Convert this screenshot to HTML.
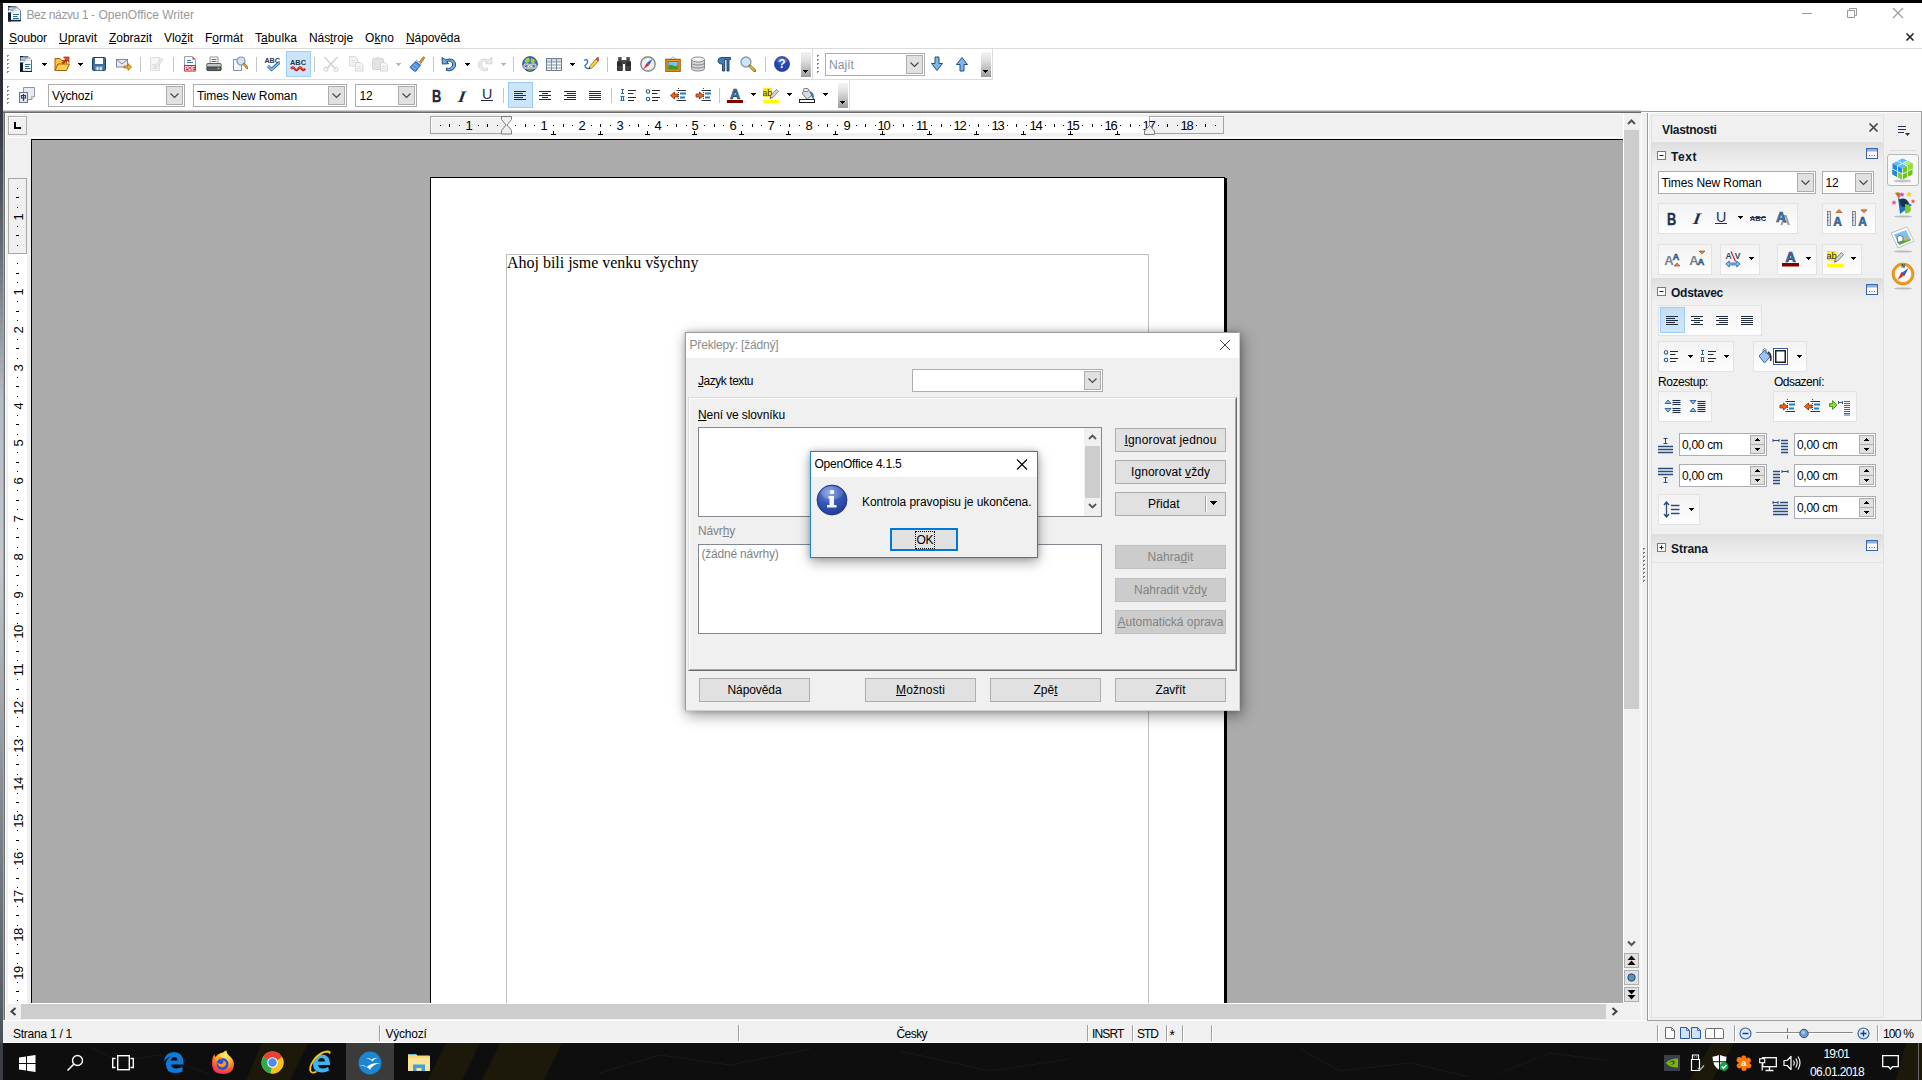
<!DOCTYPE html>
<html><head><meta charset="utf-8"><title>Bez názvu 1 - OpenOffice Writer</title>
<style>
*{box-sizing:border-box;margin:0;padding:0}
html,body{width:1922px;height:1080px;overflow:hidden;background:#fff;font-family:"Liberation Sans",sans-serif;font-size:12px;color:#000}
div,span.t,svg{position:absolute}
span.t{white-space:pre}
u{text-decoration:underline;text-underline-offset:1px}
.btn{background:#e1e1e1;border:1px solid #adadad}
.btnd{background:#cccccc;border:1px solid #bfbfbf}
.combo{background:#fff;border:1px solid #abadb3}
.cbtn{background:#e1e1e1;border:1px solid #adadad}

</style></head>
<body>

<!-- p_frame -->
<div style="left:0px;top:0px;width:1922px;height:3px;background:#000"></div><div style="left:0px;top:3px;width:3px;height:1040px;background:linear-gradient(#1c1c1c 0,#262830 5.500%,#33363e 11%,#6a7078 24%,#b4bcc4 38%,#c4c8cc 54%,#a0a6ac 67%,#787e86 81%,#565e68 96%,#4a5058 100%)"></div><div style="left:3px;top:3px;width:1919px;height:25px;background:#fff"></div><svg style="left:7px;top:5px;" width="16" height="17" viewBox="0 0 16 17">
      <path d="M1.500 1.500h8l4 4v10.500h-12z" fill="#fff" stroke="#6f7a86" stroke-width="1"/>
      <path d="M1 1h3v15.500H1z" fill="#0c1c32"/>
      <path d="M1 15.500h13" stroke="#1a2430" stroke-width="1.400"/>
      <path d="M1.500 2h8l3.500 3.500q-5-1-7 3-2-1.500-4.500-.500z" fill="#8fa3b5"/>
      <path d="M0 6.500q4-1 6 1 2-3.500 6.500-3.500" fill="none" stroke="#fff" stroke-width="1.100"/>
      <path d="M2 3.500q3-.500 5 1 1.500-1.500 3.500-1.500" fill="none" stroke="#e8eef4" stroke-width=".8"/>
      <path d="M6 9.500h6M6 11.500h4.500M6 13.500h6" stroke="#2f6a9e" stroke-width="1.100"/>
    </svg><span class="t" style="left:26.5px;top:9px;font-size:12px;line-height:12px;color:#999;letter-spacing:-0.413px;">Bez názvu 1 -</span><span class="t" style="left:98.5px;top:9px;font-size:12px;line-height:12px;color:#999;letter-spacing:-0.006px;">OpenOffice Writer</span><svg style="left:1800px;top:7px;" width="14" height="12" viewBox="0 0 14 12"><path d="M2 6.5h10" stroke="#999" stroke-width="1"/></svg><svg style="left:1845px;top:6px;" width="14" height="14" viewBox="0 0 14 14"><path d="M2.5 4.5h7v7h-7z M4.5 4.5v-2h7v7h-2" fill="none" stroke="#999" stroke-width="1"/></svg><svg style="left:1891px;top:6px;" width="14" height="14" viewBox="0 0 14 14"><path d="M2 2l10 10M12 2l-10 10" stroke="#999" stroke-width="1.1"/></svg><div style="left:3px;top:28px;width:1919px;height:20px;background:#fff"></div><span class="t" style="left:9px;top:32px;font-size:12px;line-height:12px;color:#000;letter-spacing:-0.120px;"><u>S</u>oubor</span><span class="t" style="left:59px;top:32px;font-size:12px;line-height:12px;color:#000;letter-spacing:-0.002px;"><u>U</u>pravit</span><span class="t" style="left:109px;top:32px;font-size:12px;line-height:12px;color:#000;letter-spacing:-0.047px;"><u>Z</u>obrazit</span><span class="t" style="left:164px;top:32px;font-size:12px;line-height:12px;color:#000;letter-spacing:-0.057px;">Vlo<u>ž</u>it</span><span class="t" style="left:205px;top:32px;font-size:12px;line-height:12px;color:#000;letter-spacing:-0.005px;">F<u>o</u>rmát</span><span class="t" style="left:255px;top:32px;font-size:12px;line-height:12px;color:#000;letter-spacing:0.089px;">T<u>a</u>bulka</span><span class="t" style="left:309px;top:32px;font-size:12px;line-height:12px;color:#000;letter-spacing:-0.088px;">Nás<u>t</u>roje</span><span class="t" style="left:365px;top:32px;font-size:12px;line-height:12px;color:#000;letter-spacing:0.074px;">O<u>k</u>no</span><span class="t" style="left:406px;top:32px;font-size:12px;line-height:12px;color:#000;letter-spacing:-0.090px;"><u>N</u>ápověda</span><svg style="left:1904px;top:31px;" width="12" height="12" viewBox="0 0 12 12"><path d="M2.5 2.5l7 7M9.5 2.5l-7 7" stroke="#222" stroke-width="1.6"/></svg><div style="left:3px;top:48px;width:1919px;height:1px;background:#dadada"></div><div style="left:1921px;top:111px;width:1px;height:911px;background:#a0a0a0"></div>
<!-- p_toolbars -->
<div style="left:3px;top:49px;width:1918px;height:63px;background:#fff"></div><div style="left:3px;top:79px;width:989px;height:1px;background:#dcdcdc"></div><div style="left:812px;top:49px;width:1px;height:30px;background:#dcdcdc"></div><div style="left:992px;top:49px;width:1px;height:31px;background:#dcdcdc"></div><div style="left:849px;top:80px;width:1px;height:31px;background:#dcdcdc"></div><div style="left:3px;top:110px;width:1638px;height:1px;background:#cfcfcf"></div><div style="left:3px;top:111px;width:1638px;height:1px;background:#9a9a9a"></div><div style="left:3px;top:112px;width:1638px;height:1px;background:#6b6b6b"></div><div style="left:1641px;top:111px;width:281px;height:1px;background:#a0a0a0"></div><div style="left:7px;top:55px;width:2px;height:1px;background:#8a8a8a"></div><div style="left:7px;top:56px;width:1px;height:1px;background:#8a8a8a"></div><div style="left:7px;top:59px;width:2px;height:1px;background:#8a8a8a"></div><div style="left:7px;top:60px;width:1px;height:1px;background:#8a8a8a"></div><div style="left:7px;top:63px;width:2px;height:1px;background:#8a8a8a"></div><div style="left:7px;top:64px;width:1px;height:1px;background:#8a8a8a"></div><div style="left:7px;top:67px;width:2px;height:1px;background:#8a8a8a"></div><div style="left:7px;top:68px;width:1px;height:1px;background:#8a8a8a"></div><div style="left:7px;top:71px;width:2px;height:1px;background:#8a8a8a"></div><div style="left:7px;top:72px;width:1px;height:1px;background:#8a8a8a"></div><svg style="left:18px;top:56px;" width="16" height="16" viewBox="0 0 16 16"><path d="M2.500 .5h7.500l3.500 3.500v11.500h-11z" fill="#fdfdfd" stroke="#5f6b78"/>
<path d="M2 0h3v16H2z" fill="#0c1c32"/><path d="M2 15.500h12" stroke="#1a2430" stroke-width="1.300"/>
<path d="M2.500 1h7.500l3 3.500q-5-1-7 3-2-1.500-3.500-.500z" fill="#8fa3b5"/>
<path d="M0 6q5-1.500 7 .500 2-3.500 6.500-3.500" fill="none" stroke="#fff" stroke-width="1.100"/>
<path d="M3 2.800q3-.500 5 1 1.500-1.500 3-1.500" fill="none" stroke="#e8eef4" stroke-width=".8"/>
<path d="M7 8.500h5.500M7 10.500h4M7 12.500h5.500" stroke="#2f6a9e"/></svg><div style="left:42px;top:63px;width:5px;height:1px;background:#000"></div><div style="left:43px;top:64px;width:3px;height:1px;background:#000"></div><div style="left:44px;top:65px;width:1px;height:1px;background:#000"></div><svg style="left:54px;top:56px;" width="16" height="16" viewBox="0 0 16 16"><path d="M1 14.5V2.5h5l1.5 2h5v3" fill="#f9c440" stroke="#a85c10"/>
<path d="M1 14.5l3-6.5h11.5l-3 6.5z" fill="#fbd24f" stroke="#a85c10"/>
<path d="M8.5 7.5l4-4" stroke="#c0360c" stroke-width="2.4"/><path d="M9.5 1h5.5v5.5z" fill="#e5531a" stroke="#9e2a08" stroke-width=".7"/></svg><div style="left:78px;top:63px;width:5px;height:1px;background:#000"></div><div style="left:79px;top:64px;width:3px;height:1px;background:#000"></div><div style="left:80px;top:65px;width:1px;height:1px;background:#000"></div><svg style="left:91px;top:56px;" width="16" height="16" viewBox="0 0 16 16"><rect x="1.5" y="1.5" width="13" height="13" rx="1.2" fill="#3f6f9f" stroke="#1d3f63"/>
<rect x="4" y="2" width="8" height="6" fill="#fff"/><rect x="4" y="10" width="8" height="4.5" fill="#6f8faf"/>
<rect x="5.5" y="11" width="2" height="3" fill="#e8eef4"/><rect x="8.7" y="11" width="2" height="3" fill="#e8eef4"/></svg><svg style="left:116px;top:56px;" width="16" height="16" viewBox="0 0 16 16"><rect x=".5" y="3.5" width="11" height="7.5" fill="#e6ebf2" stroke="#7b8a9c"/><path d="M.5 3.5l5.5 4.5 5.5-4.5" fill="none" stroke="#7b8a9c"/>
<path d="M8 10h4V7.6l3.6 3.4-3.6 3.4V12H8z" fill="#f5b32a" stroke="#a96508" stroke-width=".8"/></svg><div style="left:140px;top:57px;width:1px;height:15px;background:#c5c5c5"></div><svg style="left:148px;top:56px;" width="16" height="16" viewBox="0 0 16 16"><path d="M2.5 1.5h9v13h-9z" fill="#f6f6f6" stroke="#dcdcdc"/><path d="M4 8.5h4M4 10.5h3M4 12.5h6" stroke="#dedede"/>
<path d="M7 10l6.5-8 1.7 1.4-6.5 8-2.3.9z" fill="#ececec" stroke="#d4d4d4" stroke-width=".8"/></svg><div style="left:173px;top:57px;width:1px;height:15px;background:#c5c5c5"></div><svg style="left:182px;top:56px;" width="16" height="16" viewBox="0 0 16 16"><path d="M2.5 .5h8l3 3v12h-11z" fill="#fafbfd" stroke="#9aa3ad"/><path d="M10.5.5v3h3z" fill="#e03030"/>
<path d="M5 4.5h4M5 6.5h6" stroke="#3b78b5"/><rect x="2" y="9" width="12" height="5.5" fill="#d9201e"/>
<text x="8" y="13.6" font-family="Liberation Sans" font-weight="bold" font-size="5.2" fill="#fff" text-anchor="middle">PDF</text></svg><svg style="left:206px;top:56px;" width="16" height="16" viewBox="0 0 16 16"><path d="M4 1h8v7H4z" fill="#fcfdfe" stroke="#8b949d"/><path d="M5.5 3.5h5M5.5 5.5h5" stroke="#3575b5"/>
<rect x=".8" y="7.5" width="14.4" height="4" rx="1" fill="#c3c6c9" stroke="#3c3f43" stroke-width=".8"/>
<rect x=".8" y="11" width="14.4" height="3.6" rx="1" fill="#585c60" stroke="#2a2c2f" stroke-width=".8"/><circle cx="12.5" cy="12.5" r="1" fill="#7be04a"/></svg><svg style="left:232px;top:56px;" width="16" height="16" viewBox="0 0 16 16"><path d="M1.5 3.5h8v11h-8z" fill="#f1f4f8" stroke="#8a939c"/><circle cx="9" cy="5" r="4" fill="#cfe3f4" stroke="#7f95ab" stroke-width="1.2"/>
<path d="M12 8.2l3.4 3.6" stroke="#9a6a14" stroke-width="2.6" stroke-linecap="round"/><path d="M12.2 8.4l3 3.2" stroke="#e9b94a" stroke-width="1.2" stroke-linecap="round"/></svg><div style="left:256px;top:57px;width:1px;height:15px;background:#c5c5c5"></div><svg style="left:264px;top:56px;" width="16" height="16" viewBox="0 0 16 16"><text x="8.2" y="6.6" font-family="Liberation Sans" font-weight="bold" font-size="7.2" fill="#22384e" text-anchor="middle">ABC</text>
<path d="M4 10l3.5 3.5 8-7" fill="none" stroke="#1e5ea8" stroke-width="3"/><path d="M4 10l3.5 3.5 8-7" fill="none" stroke="#8cc6f7" stroke-width="1.3"/></svg><div style="left:286px;top:51px;width:25px;height:26px;background:#cce4f7;border:1px solid #9fd0fb"></div><svg style="left:290px;top:56px;" width="16" height="16" viewBox="0 0 16 16"><text x="8" y="8.6" font-family="Liberation Sans" font-weight="bold" font-size="7.4" fill="#22384e" text-anchor="middle">ABC</text>
<path d="M1 12.8q2-2.6 3.7 0t3.5 0 3.5 0 3.3-.3" fill="none" stroke="#c81616" stroke-width="2.3"/><path d="M1.3 12.4q1.8-2.2 3.4 0t3.5 0 3.5 0 3-.3" fill="none" stroke="#ff6a4a" stroke-width=".8"/></svg><div style="left:314px;top:57px;width:1px;height:15px;background:#c5c5c5"></div><svg style="left:323px;top:56px;" width="16" height="16" viewBox="0 0 16 16"><path d="M1.5 1l11 12M14.5 1l-11 12" stroke="#d2d2d2" stroke-width="1.6"/><circle cx="3" cy="13.3" r="1.9" fill="none" stroke="#dadada" stroke-width="1.3"/><circle cx="13" cy="13.3" r="1.9" fill="none" stroke="#dadada" stroke-width="1.3"/></svg><svg style="left:348px;top:56px;" width="16" height="16" viewBox="0 0 16 16"><path d="M1.5 .5h5.5l2.5 2.5v7h-8z" fill="#f4f4f4" stroke="#d9d9d9"/><path d="M7.5 6.5h5l2.5 2.5v6h-7.5z" fill="#f6f6f6" stroke="#d6d6d6"/>
<path d="M3 4.5h4M3 6.5h3M9 10.5h4.5M9 12.5h4.5" stroke="#e0e0e0"/></svg><svg style="left:372px;top:56px;" width="16" height="16" viewBox="0 0 16 16"><rect x=".5" y="2.5" width="11" height="11" rx="1" fill="#e4e4e4" stroke="#d4d4d4"/><path d="M3.5 3L6 .8 8.5 3z" fill="#eee" stroke="#d0d0d0" stroke-width=".8"/>
<path d="M8.5 6.5h4.5l2.5 2.5v6h-7z" fill="#f6f6f6" stroke="#d3d3d3"/><path d="M10 10.5h4M10 12.5h4" stroke="#dedede"/></svg><div style="left:396px;top:63px;width:5px;height:1px;background:#b5b5b5"></div><div style="left:397px;top:64px;width:3px;height:1px;background:#b5b5b5"></div><div style="left:398px;top:65px;width:1px;height:1px;background:#b5b5b5"></div><svg style="left:409px;top:56px;" width="16" height="16" viewBox="0 0 16 16"><path d="M10.5 5.5l4-4.8 1.3 1-3.5 5.2z" fill="#e3a21c" stroke="#8a5a08" stroke-width=".7"/><path d="M7.6 4.4l4.6 3.7-1 1.2-4.6-3.7z" fill="#f4f6f8" stroke="#555" stroke-width=".6"/>
<path d="M6.6 5.6l4.6 3.7-4 5.7q-1 .8-2.300-.2L.8 11.300z" fill="#4d8fe0" stroke="#1a4fa0" stroke-width=".8"/><path d="M3 10.500l4 3M5 8l4 3.200" stroke="#9cc7f7" stroke-width=".9"/></svg><div style="left:433px;top:57px;width:1px;height:15px;background:#c5c5c5"></div><svg style="left:441px;top:56px;" width="16" height="16" viewBox="0 0 16 16"><path d="M1 1.500l.3 6.500 6.500-.300-2.300-2q4.300-1.700 6 1.500 1.300 3.300-2.500 5-1.500.500-3.300-.200l-.4 2.400q3.600 1.200 6.700-.700 3.700-2.700 2.300-7.200-2.300-5.200-9.600-2.700z" fill="#7aaad6" stroke="#1f4f80" stroke-width="1" stroke-linejoin="round"/></svg><div style="left:465px;top:63px;width:5px;height:1px;background:#000"></div><div style="left:466px;top:64px;width:3px;height:1px;background:#000"></div><div style="left:467px;top:65px;width:1px;height:1px;background:#000"></div><svg style="left:477px;top:56px;" width="16" height="16" viewBox="0 0 16 16"><path d="M15 1.500l-.3 6.500-6.500-.300 2.300-2q-4.300-1.700-6 1.500-1.300 3.300 2.500 5 1.500.500 3.300-.200l.4 2.400q-3.600 1.200-6.700-.700-3.700-2.700-2.300-7.200 2.300-5.200 9.600-2.700z" fill="#ececec" stroke="#d6d6d6" stroke-width="1" stroke-linejoin="round"/></svg><div style="left:501px;top:63px;width:5px;height:1px;background:#b5b5b5"></div><div style="left:502px;top:64px;width:3px;height:1px;background:#b5b5b5"></div><div style="left:503px;top:65px;width:1px;height:1px;background:#b5b5b5"></div><div style="left:513px;top:57px;width:1px;height:15px;background:#c5c5c5"></div><svg style="left:522px;top:56px;" width="16" height="16" viewBox="0 0 16 16"><circle cx="8" cy="8" r="7.4" fill="#3f78c4" stroke="#1d3f7c" stroke-width=".8"/><path d="M3 4q2-3 4-2l1 3-3 2-2-1zM9 2.500q3-.500 4 2l-1 3-3-1z" fill="#a8cf2e"/><path d="M4 12q3-2 8 0-2 3-4 3t-4-3z" fill="#6fae2a"/>
<rect x="2.200" y="8.300" width="5.300" height="4" rx="2" fill="none" stroke="#fff" stroke-width="1.500"/><rect x="8.500" y="8.300" width="5.300" height="4" rx="2" fill="none" stroke="#fff" stroke-width="1.500"/><path d="M5.500 10.300h5" stroke="#fff" stroke-width="1.500"/>
<rect x="2.200" y="8.300" width="5.300" height="4" rx="2" fill="none" stroke="#333" stroke-width=".4"/><rect x="8.500" y="8.300" width="5.300" height="4" rx="2" fill="none" stroke="#333" stroke-width=".4"/></svg><svg style="left:546px;top:56px;" width="16" height="16" viewBox="0 0 16 16"><rect x=".5" y="2.500" width="15" height="12" fill="#fff" stroke="#6b7c96"/><rect x="1" y="3" width="14" height="2.800" fill="#d3dbe8"/><path d="M.5 6h15M.5 9h15M.5 12h15M5.500 2.500v12M10.500 2.500v12" stroke="#7f8da6" stroke-width="1"/></svg><div style="left:570px;top:63px;width:5px;height:1px;background:#000"></div><div style="left:571px;top:64px;width:3px;height:1px;background:#000"></div><div style="left:572px;top:65px;width:1px;height:1px;background:#000"></div><svg style="left:583px;top:56px;" width="16" height="16" viewBox="0 0 16 16"><path d="M1 4.500q3-2 3.500.500T2 9.500q0 3 4 3" fill="none" stroke="#2a6fd6" stroke-width="1.300"/><path d="M6 13l1-3.200 6-6.800 2.300 2-6 6.800z" fill="#f8d23a" stroke="#7a5a10" stroke-width=".7"/><path d="M13 3l1.200-1.400q1-.500 1.800.300t.300 1.700L15.300 5z" fill="#e9506a" stroke="#a02040" stroke-width=".6"/><path d="M6 13l.500-1.700 1.200 1z" fill="#222"/></svg><div style="left:607px;top:57px;width:1px;height:15px;background:#c5c5c5"></div><svg style="left:616px;top:56px;" width="16" height="16" viewBox="0 0 16 16"><rect x="1" y="5" width="5.800" height="10" rx="1.200" fill="#2b2b2b"/><rect x="9.200" y="5" width="5.800" height="10" rx="1.200" fill="#2b2b2b"/><rect x="2.300" y="1" width="3.300" height="5" fill="#3a3a3a"/><rect x="10.400" y="1" width="3.300" height="5" fill="#3a3a3a"/><rect x="5.500" y="4" width="5" height="4" fill="#444"/>
<path d="M1.500 11h5M9.500 11h5M1.500 13h5M9.500 13h5" stroke="#6a6a6a" stroke-width=".7"/><path d="M3 2h2M11 2h2" stroke="#999" stroke-width=".7"/></svg><svg style="left:640px;top:56px;" width="16" height="16" viewBox="0 0 16 16"><circle cx="8" cy="8" r="7.200" fill="#f3f4f6" stroke="#6d7379" stroke-width="1.200"/><circle cx="8" cy="8" r="5.600" fill="none" stroke="#aab" stroke-width=".5" stroke-dasharray=".7 1.500"/><path d="M12.800 2.800L9.200 9.200 6.800 6.800z" fill="#2a62d8"/><path d="M3.200 13.200L6.800 6.800 9.200 9.200z" fill="#e02828"/></svg><svg style="left:665px;top:56px;" width="16" height="16" viewBox="0 0 16 16"><path d="M5 3.500L8 .8 11 3.500" fill="none" stroke="#999" stroke-width=".8"/><rect x=".8" y="3.300" width="14.400" height="12" fill="#f0a018" stroke="#8a4a06" stroke-width="1"/><rect x="3" y="5.500" width="10" height="7.600" fill="#7fc0f0" stroke="#7a3f04" stroke-width=".6"/><path d="M3.300 13v-3.500q2.500-1.500 5 0t4.400-.500V13z" fill="#3f9a2a"/></svg><svg style="left:690px;top:56px;" width="16" height="16" viewBox="0 0 16 16"><path d="M1.500 3.500v9q0 2.500 6.500 2.500t6.500-2.500v-9z" fill="#d4d6d8" stroke="#6f7478" stroke-width=".8"/><ellipse cx="8" cy="3.500" rx="6.500" ry="2.500" fill="#f2f3f4" stroke="#6f7478" stroke-width=".8"/><path d="M1.500 6.500q0 2.500 6.500 2.500t6.500-2.500M1.500 9.500q0 2.500 6.500 2.500t6.500-2.500" fill="none" stroke="#7c8186" stroke-width=".9"/></svg><svg style="left:716px;top:56px;" width="16" height="16" viewBox="0 0 16 16"><path d="M6.500 15V8Q2 8 2 4.700 2 1.500 6 1.500h8.500v2H13V15h-2V3.500H8.700V15z" fill="#3f7fb5" stroke="#16385c" stroke-width=".9" stroke-linejoin="round"/></svg><svg style="left:740px;top:56px;" width="16" height="16" viewBox="0 0 16 16"><circle cx="6" cy="6" r="5" fill="#cfe5f6" stroke="#7f98ae" stroke-width="1.300"/><path d="M10 10l4.600 4.600" stroke="#9a6a14" stroke-width="3" stroke-linecap="round"/><path d="M10.300 10.300l4 4" stroke="#f0c050" stroke-width="1.400" stroke-linecap="round"/></svg><div style="left:765px;top:57px;width:1px;height:15px;background:#c5c5c5"></div><svg style="left:774px;top:56px;" width="16" height="16" viewBox="0 0 16 16"><circle cx="8" cy="8" r="7.600" fill="#2546b0" stroke="#152a78" stroke-width=".6"/><ellipse cx="8" cy="4.500" rx="5.500" ry="3.300" fill="#5f7fd8" opacity=".55"/>
<text x="8" y="12.300" font-family="Liberation Sans" font-weight="bold" font-size="12" fill="#fff" text-anchor="middle">?</text></svg><div style="left:801px;top:52px;width:10px;height:25px;background:linear-gradient(#f4f4f4,#dedede 35%,#9c9c9c)"></div><div style="left:803px;top:70px;width:5px;height:1px;background:#000"></div><div style="left:804px;top:71px;width:3px;height:1px;background:#000"></div><div style="left:805px;top:72px;width:1px;height:1px;background:#000"></div><div style="left:817px;top:55px;width:2px;height:1px;background:#8a8a8a"></div><div style="left:817px;top:56px;width:1px;height:1px;background:#8a8a8a"></div><div style="left:817px;top:59px;width:2px;height:1px;background:#8a8a8a"></div><div style="left:817px;top:60px;width:1px;height:1px;background:#8a8a8a"></div><div style="left:817px;top:63px;width:2px;height:1px;background:#8a8a8a"></div><div style="left:817px;top:64px;width:1px;height:1px;background:#8a8a8a"></div><div style="left:817px;top:67px;width:2px;height:1px;background:#8a8a8a"></div><div style="left:817px;top:68px;width:1px;height:1px;background:#8a8a8a"></div><div style="left:817px;top:71px;width:2px;height:1px;background:#8a8a8a"></div><div style="left:817px;top:72px;width:1px;height:1px;background:#8a8a8a"></div><div class="combo" style="left:825px;top:53px;width:100px;height:23px;"></div><div class="cbtn" style="left:906px;top:55px;width:17px;height:19px;"></div><svg style="left:909px;top:61px;" width="11" height="7" viewBox="0 0 11 7"><path d="M1.500 1.500l4 4 4-4" fill="none" stroke="#444" stroke-width="1.100"/></svg><span class="t" style="left:829px;top:59px;font-size:12px;line-height:12px;color:#8a8fa6;letter-spacing:0.062px;">Najít</span><svg style="left:929px;top:56px;" width="16" height="16" viewBox="0 0 16 16"><path d="M6 1h4v6.500h3.500L8 14.500 2.500 7.500H6z" fill="#7fb5e8" stroke="#1f4f86" stroke-width="1" stroke-linejoin="round"/></svg><svg style="left:954px;top:56px;" width="16" height="16" viewBox="0 0 16 16"><path d="M6 15h4V8.500h3.500L8 1.500 2.500 8.500H6z" fill="#7fb5e8" stroke="#1f4f86" stroke-width="1" stroke-linejoin="round"/></svg><div style="left:981px;top:52px;width:10px;height:25px;background:linear-gradient(#f4f4f4,#dedede 35%,#9c9c9c)"></div><div style="left:983px;top:70px;width:5px;height:1px;background:#000"></div><div style="left:984px;top:71px;width:3px;height:1px;background:#000"></div><div style="left:985px;top:72px;width:1px;height:1px;background:#000"></div><div style="left:7px;top:86px;width:2px;height:1px;background:#8a8a8a"></div><div style="left:7px;top:87px;width:1px;height:1px;background:#8a8a8a"></div><div style="left:7px;top:90px;width:2px;height:1px;background:#8a8a8a"></div><div style="left:7px;top:91px;width:1px;height:1px;background:#8a8a8a"></div><div style="left:7px;top:94px;width:2px;height:1px;background:#8a8a8a"></div><div style="left:7px;top:95px;width:1px;height:1px;background:#8a8a8a"></div><div style="left:7px;top:98px;width:2px;height:1px;background:#8a8a8a"></div><div style="left:7px;top:99px;width:1px;height:1px;background:#8a8a8a"></div><div style="left:7px;top:102px;width:2px;height:1px;background:#8a8a8a"></div><div style="left:7px;top:103px;width:1px;height:1px;background:#8a8a8a"></div><svg style="left:19px;top:87px;" width="16" height="16" viewBox="0 0 16 16"><path d="M4.500 .500h11v9l-3 3h-8z" fill="#e6ebf2" stroke="#8894a6"/><path d="M15.500 9.500h-3v3z" fill="#fff" stroke="#8894a6" stroke-width=".7"/><rect x=".5" y="5.500" width="8" height="10" fill="#dfe5ee" stroke="#6a778a"/><path d="M2.500 8.500h4v2.500h-4zM4.500 7v7" fill="none" stroke="#2d3c50" stroke-width="1.100"/></svg><div class="combo" style="left:48px;top:84px;width:137px;height:23px;"></div><div class="cbtn" style="left:166px;top:86px;width:17px;height:19px;"></div><svg style="left:169px;top:92px;" width="11" height="7" viewBox="0 0 11 7"><path d="M1.500 1.500l4 4 4-4" fill="none" stroke="#444" stroke-width="1.100"/></svg><span class="t" style="left:52px;top:90px;font-size:12px;line-height:12px;color:#000;letter-spacing:-0.241px;">Výchozí</span><div class="combo" style="left:193px;top:84px;width:154px;height:23px;"></div><div class="cbtn" style="left:328px;top:86px;width:17px;height:19px;"></div><svg style="left:331px;top:92px;" width="11" height="7" viewBox="0 0 11 7"><path d="M1.500 1.500l4 4 4-4" fill="none" stroke="#444" stroke-width="1.100"/></svg><span class="t" style="left:197px;top:90px;font-size:12px;line-height:12px;color:#000;letter-spacing:-0.105px;">Times New Roman</span><div class="combo" style="left:355px;top:84px;width:62px;height:23px;"></div><div class="cbtn" style="left:398px;top:86px;width:17px;height:19px;"></div><svg style="left:401px;top:92px;" width="11" height="7" viewBox="0 0 11 7"><path d="M1.500 1.500l4 4 4-4" fill="none" stroke="#444" stroke-width="1.100"/></svg><span class="t" style="left:359.5px;top:90px;font-size:12px;line-height:12px;color:#000;letter-spacing:-0.180px;">12</span><span class="t" style="left:431.5px;top:89px;font-size:16px;line-height:16px;color:#1f2a40;font-weight:bold;transform:scaleX(.8);transform-origin:0 0;-webkit-text-stroke:.35px #1f2a40;">B</span><span class="t" style="left:457.0px;top:89px;font-size:16px;line-height:16px;color:#1f2a40;font-family:'Liberation Serif',serif;font-weight:bold;font-style:italic;transform:scaleX(1.15) skewX(-8deg);transform-origin:0 100%;">I</span><span class="t" style="left:482px;top:87px;font-size:14px;line-height:14px;color:#1f2a40;transform:scaleX(1.02);transform-origin:0 0;">U</span><div style="left:481px;top:100px;width:12px;height:1px;background:#1f2a40"></div><div style="left:503px;top:88px;width:1px;height:15px;background:#c5c5c5"></div><div style="left:508px;top:82px;width:25px;height:26px;background:#cce4f7;border:1px solid #9ccdf9"></div><div style="left:514px;top:91px;width:12px;height:1px;background:#1f2b3d"></div><div style="left:514px;top:93px;width:9px;height:1px;background:#1f2b3d"></div><div style="left:514px;top:95px;width:12px;height:1px;background:#1f2b3d"></div><div style="left:514px;top:97px;width:9px;height:1px;background:#1f2b3d"></div><div style="left:514px;top:99px;width:12px;height:1px;background:#1f2b3d"></div><div style="left:539px;top:91px;width:12px;height:1px;background:#1f2b3d"></div><div style="left:542px;top:93px;width:6px;height:1px;background:#1f2b3d"></div><div style="left:539px;top:95px;width:12px;height:1px;background:#1f2b3d"></div><div style="left:542px;top:97px;width:6px;height:1px;background:#1f2b3d"></div><div style="left:539px;top:99px;width:12px;height:1px;background:#1f2b3d"></div><div style="left:564px;top:91px;width:12px;height:1px;background:#1f2b3d"></div><div style="left:567px;top:93px;width:9px;height:1px;background:#1f2b3d"></div><div style="left:564px;top:95px;width:12px;height:1px;background:#1f2b3d"></div><div style="left:567px;top:97px;width:9px;height:1px;background:#1f2b3d"></div><div style="left:564px;top:99px;width:12px;height:1px;background:#1f2b3d"></div><div style="left:589px;top:91px;width:12px;height:1px;background:#1f2b3d"></div><div style="left:589px;top:93px;width:12px;height:1px;background:#1f2b3d"></div><div style="left:589px;top:95px;width:12px;height:1px;background:#1f2b3d"></div><div style="left:589px;top:97px;width:12px;height:1px;background:#1f2b3d"></div><div style="left:589px;top:99px;width:12px;height:1px;background:#1f2b3d"></div><div style="left:611px;top:88px;width:1px;height:15px;background:#c5c5c5"></div><svg style="left:620px;top:87px;" width="16" height="16" viewBox="0 0 16 16"><path d="M1 2.500h3M2.500 2.500v4M1 6.500h3M.5 9.500h4M1.500 9.500v4M3.500 9.500v4M.5 13.500h4" stroke="#2a6aa6" stroke-width="1"/><path d="M8 3.500h8M8 6.500h5.500M8 10.500h8M8 13.500h6" stroke="#2a2a2a" stroke-width="1"/></svg><svg style="left:645px;top:87px;" width="16" height="16" viewBox="0 0 16 16"><circle cx="3" cy="4.500" r="1.700" fill="#fff" stroke="#2a5a96" stroke-width="1.100"/><circle cx="3" cy="12" r="1.700" fill="#fff" stroke="#2a5a96" stroke-width="1.100"/><path d="M7 3.500h8M7 6.500h5.500M7 10.500h8M7 13.500h6" stroke="#2a2a2a" stroke-width="1"/></svg><svg style="left:670px;top:87px;" width="16" height="16" viewBox="0 0 16 16"><path d="M8.500 1v14" stroke="#444" stroke-width="1" stroke-dasharray="1 1"/><path d="M6.500 3.500h10M6.500 13.500h10" stroke="#333" stroke-width="1"/><rect x="10" y="5.500" width="6.500" height="2" fill="#1f7fd0"/><rect x="10" y="9.500" width="5" height="2" fill="#1f7fd0"/><path d="M.5 8.500L4.500 5v2h3.500v3H4.500v2z" fill="#f0641a" stroke="#8a2a08" stroke-width=".8" stroke-linejoin="round"/></svg><svg style="left:695px;top:87px;" width="16" height="16" viewBox="0 0 16 16"><path d="M8.500 1v14" stroke="#444" stroke-width="1" stroke-dasharray="1 1"/><path d="M6.500 3.500h10M6.500 13.500h10" stroke="#333" stroke-width="1"/><rect x="10" y="5.500" width="6.500" height="2" fill="#1f7fd0"/><rect x="10" y="9.500" width="5" height="2" fill="#1f7fd0"/><path d="M8.500 8.500L4.500 5v2H1v3h3.500v2z" fill="#f0641a" stroke="#8a2a08" stroke-width=".8" stroke-linejoin="round"/></svg><div style="left:719px;top:88px;width:1px;height:15px;background:#c5c5c5"></div><svg style="left:727px;top:87px;" width="16" height="16" viewBox="0 0 16 16"><text x="8" y="11.500" font-family="Liberation Sans" font-weight="bold" font-size="14" fill="#3f7cb8" stroke="#1a3a60" stroke-width=".7" text-anchor="middle">A</text><rect x="0" y="13" width="16" height="3" fill="#800000"/></svg><div style="left:751px;top:93px;width:5px;height:1px;background:#000"></div><div style="left:752px;top:94px;width:3px;height:1px;background:#000"></div><div style="left:753px;top:95px;width:1px;height:1px;background:#000"></div><svg style="left:763px;top:87px;" width="16" height="16" viewBox="0 0 16 16"><rect x="0" y="1" width="9" height="9" fill="#ffe818"/><text x="4.300" y="8.500" font-family="Liberation Sans" font-size="9" fill="#333" text-anchor="middle">ab</text><path d="M7 11.500l1-3 5.500-6 2 1.800-5.500 6z" fill="#d8dde2" stroke="#555" stroke-width=".7"/><path d="M7 11.500l.600-1.800 1.400 1.200z" fill="#d04a10"/><rect x="0" y="13" width="16" height="3" fill="#ffff00"/></svg><div style="left:787px;top:93px;width:5px;height:1px;background:#000"></div><div style="left:788px;top:94px;width:3px;height:1px;background:#000"></div><div style="left:789px;top:95px;width:1px;height:1px;background:#000"></div><svg style="left:799px;top:87px;" width="16" height="16" viewBox="0 0 16 16"><path d="M3 6l5-4 6 5-6 5.500z" fill="#d9dde2" stroke="#555" stroke-width=".8"/><ellipse cx="7" cy="3" rx="3" ry="1.600" fill="#eee" stroke="#555" stroke-width=".7"/><path d="M11 5q4 0 3.500 7-1.500-1-2-4z" fill="#2f7fd8" stroke="#1a4a90" stroke-width=".5"/><rect x=".5" y="12.500" width="15" height="3" fill="#fff" stroke="#222" stroke-width="1"/></svg><div style="left:823px;top:93px;width:5px;height:1px;background:#000"></div><div style="left:824px;top:94px;width:3px;height:1px;background:#000"></div><div style="left:825px;top:95px;width:1px;height:1px;background:#000"></div><div style="left:838px;top:83px;width:10px;height:25px;background:linear-gradient(#f4f4f4,#dedede 35%,#9c9c9c)"></div><div style="left:840px;top:101px;width:5px;height:1px;background:#000"></div><div style="left:841px;top:102px;width:3px;height:1px;background:#000"></div><div style="left:842px;top:103px;width:1px;height:1px;background:#000"></div>
<!-- p_doc -->
<div style="left:3px;top:113px;width:1645px;height:27px;background:#f0f0f0"></div><div style="left:3px;top:113px;width:1645px;height:1px;background:#fff"></div><div style="left:3px;top:137px;width:1620px;height:1px;background:#fff"></div><div style="left:8px;top:116px;width:19px;height:19px;background:#f0f0f0;border:1px solid #adadad;box-shadow:inset 1px 1px 0 #fff"></div><svg style="left:13px;top:121px;" width="10" height="9" viewBox="0 0 10 9"><path d="M2 1v6h6" fill="none" stroke="#000" stroke-width="2"/></svg><div style="left:430px;top:117px;width:794px;height:16px;background:#fff"></div><div style="left:430px;top:116px;width:77px;height:18px;background:#f0f0f0;border:1px solid #a4a4a4;border-right:none;box-shadow:inset 1px 1px 0 #fff"></div><div style="left:1149px;top:116px;width:75px;height:18px;background:#f0f0f0;border:1px solid #a4a4a4;box-shadow:inset 1px 1px 0 #fff"></div><div style="left:440px;top:125px;width:1px;height:1px;background:#000"></div><div style="left:449px;top:124px;width:1px;height:3px;background:#000"></div><div style="left:459px;top:125px;width:1px;height:1px;background:#000"></div><span class="t" style="left:449px;top:119px;font-size:13px;line-height:13px;color:#000;width:40px;text-align:center;letter-spacing:0;">1</span><div style="left:478px;top:125px;width:1px;height:1px;background:#000"></div><div style="left:487px;top:124px;width:1px;height:3px;background:#000"></div><div style="left:497px;top:125px;width:1px;height:1px;background:#000"></div><div style="left:515px;top:125px;width:1px;height:1px;background:#000"></div><div style="left:525px;top:124px;width:1px;height:3px;background:#000"></div><div style="left:534px;top:125px;width:1px;height:1px;background:#000"></div><span class="t" style="left:524px;top:119px;font-size:13px;line-height:13px;color:#000;width:40px;text-align:center;letter-spacing:0;">1</span><div style="left:553px;top:125px;width:1px;height:1px;background:#000"></div><div style="left:563px;top:124px;width:1px;height:3px;background:#000"></div><div style="left:572px;top:125px;width:1px;height:1px;background:#000"></div><span class="t" style="left:562px;top:119px;font-size:13px;line-height:13px;color:#000;width:40px;text-align:center;letter-spacing:0;">2</span><div style="left:591px;top:125px;width:1px;height:1px;background:#000"></div><div style="left:600px;top:124px;width:1px;height:3px;background:#000"></div><div style="left:610px;top:125px;width:1px;height:1px;background:#000"></div><span class="t" style="left:600px;top:119px;font-size:13px;line-height:13px;color:#000;width:40px;text-align:center;letter-spacing:0;">3</span><div style="left:629px;top:125px;width:1px;height:1px;background:#000"></div><div style="left:638px;top:124px;width:1px;height:3px;background:#000"></div><div style="left:648px;top:125px;width:1px;height:1px;background:#000"></div><span class="t" style="left:638px;top:119px;font-size:13px;line-height:13px;color:#000;width:40px;text-align:center;letter-spacing:0;">4</span><div style="left:667px;top:125px;width:1px;height:1px;background:#000"></div><div style="left:676px;top:124px;width:1px;height:3px;background:#000"></div><div style="left:686px;top:125px;width:1px;height:1px;background:#000"></div><span class="t" style="left:675px;top:119px;font-size:13px;line-height:13px;color:#000;width:40px;text-align:center;letter-spacing:0;">5</span><div style="left:704px;top:125px;width:1px;height:1px;background:#000"></div><div style="left:714px;top:124px;width:1px;height:3px;background:#000"></div><div style="left:723px;top:125px;width:1px;height:1px;background:#000"></div><span class="t" style="left:713px;top:119px;font-size:13px;line-height:13px;color:#000;width:40px;text-align:center;letter-spacing:0;">6</span><div style="left:742px;top:125px;width:1px;height:1px;background:#000"></div><div style="left:752px;top:124px;width:1px;height:3px;background:#000"></div><div style="left:761px;top:125px;width:1px;height:1px;background:#000"></div><span class="t" style="left:751px;top:119px;font-size:13px;line-height:13px;color:#000;width:40px;text-align:center;letter-spacing:0;">7</span><div style="left:780px;top:125px;width:1px;height:1px;background:#000"></div><div style="left:789px;top:124px;width:1px;height:3px;background:#000"></div><div style="left:799px;top:125px;width:1px;height:1px;background:#000"></div><span class="t" style="left:789px;top:119px;font-size:13px;line-height:13px;color:#000;width:40px;text-align:center;letter-spacing:0;">8</span><div style="left:818px;top:125px;width:1px;height:1px;background:#000"></div><div style="left:827px;top:124px;width:1px;height:3px;background:#000"></div><div style="left:837px;top:125px;width:1px;height:1px;background:#000"></div><span class="t" style="left:827px;top:119px;font-size:13px;line-height:13px;color:#000;width:40px;text-align:center;letter-spacing:0;">9</span><div style="left:856px;top:125px;width:1px;height:1px;background:#000"></div><div style="left:865px;top:124px;width:1px;height:3px;background:#000"></div><div style="left:875px;top:125px;width:1px;height:1px;background:#000"></div><span class="t" style="left:864px;top:119px;font-size:13px;line-height:13px;color:#000;width:40px;text-align:center;letter-spacing:-1.200px;text-indent:-1px;">10</span><div style="left:893px;top:125px;width:1px;height:1px;background:#000"></div><div style="left:903px;top:124px;width:1px;height:3px;background:#000"></div><div style="left:912px;top:125px;width:1px;height:1px;background:#000"></div><span class="t" style="left:902px;top:119px;font-size:13px;line-height:13px;color:#000;width:40px;text-align:center;letter-spacing:-1.200px;text-indent:-1px;">11</span><div style="left:931px;top:125px;width:1px;height:1px;background:#000"></div><div style="left:941px;top:124px;width:1px;height:3px;background:#000"></div><div style="left:950px;top:125px;width:1px;height:1px;background:#000"></div><span class="t" style="left:940px;top:119px;font-size:13px;line-height:13px;color:#000;width:40px;text-align:center;letter-spacing:-1.200px;text-indent:-1px;">12</span><div style="left:969px;top:125px;width:1px;height:1px;background:#000"></div><div style="left:978px;top:124px;width:1px;height:3px;background:#000"></div><div style="left:988px;top:125px;width:1px;height:1px;background:#000"></div><span class="t" style="left:978px;top:119px;font-size:13px;line-height:13px;color:#000;width:40px;text-align:center;letter-spacing:-1.200px;text-indent:-1px;">13</span><div style="left:1007px;top:125px;width:1px;height:1px;background:#000"></div><div style="left:1016px;top:124px;width:1px;height:3px;background:#000"></div><div style="left:1026px;top:125px;width:1px;height:1px;background:#000"></div><span class="t" style="left:1016px;top:119px;font-size:13px;line-height:13px;color:#000;width:40px;text-align:center;letter-spacing:-1.200px;text-indent:-1px;">14</span><div style="left:1045px;top:125px;width:1px;height:1px;background:#000"></div><div style="left:1054px;top:124px;width:1px;height:3px;background:#000"></div><div style="left:1063px;top:125px;width:1px;height:1px;background:#000"></div><span class="t" style="left:1053px;top:119px;font-size:13px;line-height:13px;color:#000;width:40px;text-align:center;letter-spacing:-1.200px;text-indent:-1px;">15</span><div style="left:1082px;top:125px;width:1px;height:1px;background:#000"></div><div style="left:1092px;top:124px;width:1px;height:3px;background:#000"></div><div style="left:1101px;top:125px;width:1px;height:1px;background:#000"></div><span class="t" style="left:1091px;top:119px;font-size:13px;line-height:13px;color:#000;width:40px;text-align:center;letter-spacing:-1.200px;text-indent:-1px;">16</span><div style="left:1120px;top:125px;width:1px;height:1px;background:#000"></div><div style="left:1130px;top:124px;width:1px;height:3px;background:#000"></div><div style="left:1139px;top:125px;width:1px;height:1px;background:#000"></div><span class="t" style="left:1129px;top:119px;font-size:13px;line-height:13px;color:#000;width:40px;text-align:center;letter-spacing:-1.200px;text-indent:-1px;">17</span><div style="left:1158px;top:125px;width:1px;height:1px;background:#000"></div><div style="left:1167px;top:124px;width:1px;height:3px;background:#000"></div><div style="left:1177px;top:125px;width:1px;height:1px;background:#000"></div><span class="t" style="left:1167px;top:119px;font-size:13px;line-height:13px;color:#000;width:40px;text-align:center;letter-spacing:-1.200px;text-indent:-1px;">18</span><div style="left:1196px;top:125px;width:1px;height:1px;background:#000"></div><div style="left:1205px;top:124px;width:1px;height:3px;background:#000"></div><div style="left:1215px;top:125px;width:1px;height:1px;background:#000"></div><div style="left:553px;top:131px;width:1px;height:4px;background:#000"></div><div style="left:551px;top:134px;width:5px;height:1px;background:#000"></div><div style="left:600px;top:131px;width:1px;height:4px;background:#000"></div><div style="left:598px;top:134px;width:5px;height:1px;background:#000"></div><div style="left:647px;top:131px;width:1px;height:4px;background:#000"></div><div style="left:645px;top:134px;width:5px;height:1px;background:#000"></div><div style="left:694px;top:131px;width:1px;height:4px;background:#000"></div><div style="left:692px;top:134px;width:5px;height:1px;background:#000"></div><div style="left:741px;top:131px;width:1px;height:4px;background:#000"></div><div style="left:739px;top:134px;width:5px;height:1px;background:#000"></div><div style="left:788px;top:131px;width:1px;height:4px;background:#000"></div><div style="left:786px;top:134px;width:5px;height:1px;background:#000"></div><div style="left:835px;top:131px;width:1px;height:4px;background:#000"></div><div style="left:833px;top:134px;width:5px;height:1px;background:#000"></div><div style="left:882px;top:131px;width:1px;height:4px;background:#000"></div><div style="left:880px;top:134px;width:5px;height:1px;background:#000"></div><div style="left:929px;top:131px;width:1px;height:4px;background:#000"></div><div style="left:927px;top:134px;width:5px;height:1px;background:#000"></div><div style="left:976px;top:131px;width:1px;height:4px;background:#000"></div><div style="left:974px;top:134px;width:5px;height:1px;background:#000"></div><div style="left:1023px;top:131px;width:1px;height:4px;background:#000"></div><div style="left:1021px;top:134px;width:5px;height:1px;background:#000"></div><div style="left:1070px;top:131px;width:1px;height:4px;background:#000"></div><div style="left:1068px;top:134px;width:5px;height:1px;background:#000"></div><div style="left:1117px;top:131px;width:1px;height:4px;background:#000"></div><div style="left:1115px;top:134px;width:5px;height:1px;background:#000"></div><svg style="left:500px;top:115px;" width="13" height="21" viewBox="0 0 13 21"><path d="M1.500 1.500h10v3l-4.500 5.500 4.500 5.500v3.500h-10v-3.500l4.500-5.500-4.500-5.500z" fill="#f0f0f0" stroke="#7a7a7a" stroke-width="1"/></svg><svg style="left:1143px;top:124px;" width="13" height="12" viewBox="0 0 13 12"><path d="M1.500 10.500v-3.500l5-5.500 5 5.500v3.500z" fill="#f0f0f0" stroke="#7a7a7a" stroke-width="1"/></svg><div style="left:3px;top:139px;width:28px;height:864px;background:#f0f0f0"></div><div style="left:8px;top:178px;width:19px;height:825px;background:#fff"></div><div style="left:8px;top:178px;width:19px;height:76px;background:#f0f0f0;border:1px solid #a8a8a8"></div><div style="left:17px;top:188px;width:1px;height:1px;background:#000"></div><div style="left:16px;top:197px;width:3px;height:1px;background:#000"></div><div style="left:17px;top:207px;width:1px;height:1px;background:#000"></div><span class="t" style="left:-1px;top:210px;width:40px;height:14px;line-height:14px;font-size:13px;text-align:center;transform:rotate(-90deg);letter-spacing:-.5px">1</span><div style="left:17px;top:226px;width:1px;height:1px;background:#000"></div><div style="left:16px;top:235px;width:3px;height:1px;background:#000"></div><div style="left:17px;top:245px;width:1px;height:1px;background:#000"></div><div style="left:17px;top:263px;width:1px;height:1px;background:#000"></div><div style="left:16px;top:273px;width:3px;height:1px;background:#000"></div><div style="left:17px;top:282px;width:1px;height:1px;background:#000"></div><span class="t" style="left:-1px;top:285px;width:40px;height:14px;line-height:14px;font-size:13px;text-align:center;transform:rotate(-90deg);letter-spacing:-.5px">1</span><div style="left:17px;top:301px;width:1px;height:1px;background:#000"></div><div style="left:16px;top:311px;width:3px;height:1px;background:#000"></div><div style="left:17px;top:320px;width:1px;height:1px;background:#000"></div><span class="t" style="left:-1px;top:323px;width:40px;height:14px;line-height:14px;font-size:13px;text-align:center;transform:rotate(-90deg);letter-spacing:-.5px">2</span><div style="left:17px;top:339px;width:1px;height:1px;background:#000"></div><div style="left:16px;top:348px;width:3px;height:1px;background:#000"></div><div style="left:17px;top:358px;width:1px;height:1px;background:#000"></div><span class="t" style="left:-1px;top:361px;width:40px;height:14px;line-height:14px;font-size:13px;text-align:center;transform:rotate(-90deg);letter-spacing:-.5px">3</span><div style="left:17px;top:377px;width:1px;height:1px;background:#000"></div><div style="left:16px;top:386px;width:3px;height:1px;background:#000"></div><div style="left:17px;top:396px;width:1px;height:1px;background:#000"></div><span class="t" style="left:-1px;top:399px;width:40px;height:14px;line-height:14px;font-size:13px;text-align:center;transform:rotate(-90deg);letter-spacing:-.5px">4</span><div style="left:17px;top:415px;width:1px;height:1px;background:#000"></div><div style="left:16px;top:424px;width:3px;height:1px;background:#000"></div><div style="left:17px;top:434px;width:1px;height:1px;background:#000"></div><span class="t" style="left:-1px;top:436px;width:40px;height:14px;line-height:14px;font-size:13px;text-align:center;transform:rotate(-90deg);letter-spacing:-.5px">5</span><div style="left:17px;top:452px;width:1px;height:1px;background:#000"></div><div style="left:16px;top:462px;width:3px;height:1px;background:#000"></div><div style="left:17px;top:471px;width:1px;height:1px;background:#000"></div><span class="t" style="left:-1px;top:474px;width:40px;height:14px;line-height:14px;font-size:13px;text-align:center;transform:rotate(-90deg);letter-spacing:-.5px">6</span><div style="left:17px;top:490px;width:1px;height:1px;background:#000"></div><div style="left:16px;top:500px;width:3px;height:1px;background:#000"></div><div style="left:17px;top:509px;width:1px;height:1px;background:#000"></div><span class="t" style="left:-1px;top:512px;width:40px;height:14px;line-height:14px;font-size:13px;text-align:center;transform:rotate(-90deg);letter-spacing:-.5px">7</span><div style="left:17px;top:528px;width:1px;height:1px;background:#000"></div><div style="left:16px;top:537px;width:3px;height:1px;background:#000"></div><div style="left:17px;top:547px;width:1px;height:1px;background:#000"></div><span class="t" style="left:-1px;top:550px;width:40px;height:14px;line-height:14px;font-size:13px;text-align:center;transform:rotate(-90deg);letter-spacing:-.5px">8</span><div style="left:17px;top:566px;width:1px;height:1px;background:#000"></div><div style="left:16px;top:575px;width:3px;height:1px;background:#000"></div><div style="left:17px;top:585px;width:1px;height:1px;background:#000"></div><span class="t" style="left:-1px;top:588px;width:40px;height:14px;line-height:14px;font-size:13px;text-align:center;transform:rotate(-90deg);letter-spacing:-.5px">9</span><div style="left:17px;top:604px;width:1px;height:1px;background:#000"></div><div style="left:16px;top:613px;width:3px;height:1px;background:#000"></div><div style="left:17px;top:623px;width:1px;height:1px;background:#000"></div><span class="t" style="left:-1px;top:625px;width:40px;height:14px;line-height:14px;font-size:13px;text-align:center;transform:rotate(-90deg);letter-spacing:-.5px">10</span><div style="left:17px;top:641px;width:1px;height:1px;background:#000"></div><div style="left:16px;top:651px;width:3px;height:1px;background:#000"></div><div style="left:17px;top:660px;width:1px;height:1px;background:#000"></div><span class="t" style="left:-1px;top:663px;width:40px;height:14px;line-height:14px;font-size:13px;text-align:center;transform:rotate(-90deg);letter-spacing:-.5px">11</span><div style="left:17px;top:679px;width:1px;height:1px;background:#000"></div><div style="left:16px;top:689px;width:3px;height:1px;background:#000"></div><div style="left:17px;top:698px;width:1px;height:1px;background:#000"></div><span class="t" style="left:-1px;top:701px;width:40px;height:14px;line-height:14px;font-size:13px;text-align:center;transform:rotate(-90deg);letter-spacing:-.5px">12</span><div style="left:17px;top:717px;width:1px;height:1px;background:#000"></div><div style="left:16px;top:726px;width:3px;height:1px;background:#000"></div><div style="left:17px;top:736px;width:1px;height:1px;background:#000"></div><span class="t" style="left:-1px;top:739px;width:40px;height:14px;line-height:14px;font-size:13px;text-align:center;transform:rotate(-90deg);letter-spacing:-.5px">13</span><div style="left:17px;top:755px;width:1px;height:1px;background:#000"></div><div style="left:16px;top:764px;width:3px;height:1px;background:#000"></div><div style="left:17px;top:774px;width:1px;height:1px;background:#000"></div><span class="t" style="left:-1px;top:777px;width:40px;height:14px;line-height:14px;font-size:13px;text-align:center;transform:rotate(-90deg);letter-spacing:-.5px">14</span><div style="left:17px;top:793px;width:1px;height:1px;background:#000"></div><div style="left:16px;top:802px;width:3px;height:1px;background:#000"></div><div style="left:17px;top:811px;width:1px;height:1px;background:#000"></div><span class="t" style="left:-1px;top:814px;width:40px;height:14px;line-height:14px;font-size:13px;text-align:center;transform:rotate(-90deg);letter-spacing:-.5px">15</span><div style="left:17px;top:830px;width:1px;height:1px;background:#000"></div><div style="left:16px;top:840px;width:3px;height:1px;background:#000"></div><div style="left:17px;top:849px;width:1px;height:1px;background:#000"></div><span class="t" style="left:-1px;top:852px;width:40px;height:14px;line-height:14px;font-size:13px;text-align:center;transform:rotate(-90deg);letter-spacing:-.5px">16</span><div style="left:17px;top:868px;width:1px;height:1px;background:#000"></div><div style="left:16px;top:878px;width:3px;height:1px;background:#000"></div><div style="left:17px;top:887px;width:1px;height:1px;background:#000"></div><span class="t" style="left:-1px;top:890px;width:40px;height:14px;line-height:14px;font-size:13px;text-align:center;transform:rotate(-90deg);letter-spacing:-.5px">17</span><div style="left:17px;top:906px;width:1px;height:1px;background:#000"></div><div style="left:16px;top:915px;width:3px;height:1px;background:#000"></div><div style="left:17px;top:925px;width:1px;height:1px;background:#000"></div><span class="t" style="left:-1px;top:928px;width:40px;height:14px;line-height:14px;font-size:13px;text-align:center;transform:rotate(-90deg);letter-spacing:-.5px">18</span><div style="left:17px;top:944px;width:1px;height:1px;background:#000"></div><div style="left:16px;top:953px;width:3px;height:1px;background:#000"></div><div style="left:17px;top:963px;width:1px;height:1px;background:#000"></div><span class="t" style="left:-1px;top:966px;width:40px;height:14px;line-height:14px;font-size:13px;text-align:center;transform:rotate(-90deg);letter-spacing:-.5px">19</span><div style="left:17px;top:982px;width:1px;height:1px;background:#000"></div><div style="left:16px;top:991px;width:3px;height:1px;background:#000"></div><div style="left:17px;top:1000px;width:1px;height:1px;background:#000"></div><div style="left:31px;top:139px;width:1592px;height:864px;background:#ababab;border-top:1px solid #000;border-left:1px solid #000"></div><div style="left:1225px;top:178px;width:2px;height:825px;background:#000"></div><div style="left:430px;top:177px;width:795px;height:826px;background:#fff;border:1px solid #000;border-bottom:none"></div><div style="left:506px;top:254px;width:643px;height:749px;border:1px solid #c0c0c0;border-bottom:none"></div><span class="t" style="left:507px;top:255px;font-size:16px;line-height:16px;color:#000;font-family:'Liberation Serif',serif;letter-spacing:-0.017px;">Ahoj bili jsme venku všychny</span><div style="left:1623px;top:113px;width:1px;height:890px;background:#fff"></div><div style="left:1624px;top:113px;width:17px;height:890px;background:#f0f0f0"></div><div style="left:1624px;top:130px;width:15px;height:579px;background:#cdcdcd"></div><svg style="left:1626px;top:118px;" width="11" height="8" viewBox="0 0 11 8"><path d="M2 6l3.500-3.500 3.500 3.500" fill="none" stroke="#555" stroke-width="2"/></svg><svg style="left:1626px;top:940px;" width="11" height="8" viewBox="0 0 11 8"><path d="M2 1.500l3.500 3.500 3.500-3.500" fill="none" stroke="#555" stroke-width="2"/></svg><div style="left:1624px;top:953px;width:15px;height:15px;background:#e1e1e1;border:1px solid #adadad"></div><svg style="left:1627px;top:955px;" width="9" height="11" viewBox="0 0 9 11"><path d="M.5 5L4.500 .5 8.500 5zM.5 10L4.500 5.500 8.500 10z" fill="#000"/></svg><div style="left:1624px;top:970px;width:15px;height:15px;background:#e1e1e1;border:1px solid #adadad"></div><svg style="left:1627px;top:973px;" width="9" height="9" viewBox="0 0 9 9"><circle cx="4.500" cy="4.500" r="3.700" fill="#5f8fc0" stroke="#1f3f66" stroke-width=".9"/></svg><div style="left:1624px;top:987px;width:15px;height:15px;background:#e1e1e1;border:1px solid #adadad"></div><svg style="left:1627px;top:989px;" width="9" height="11" viewBox="0 0 9 11"><path d="M.5 1L4.500 5.500 8.500 1zM.5 6L4.500 10.500 8.500 6z" fill="#000"/></svg><div style="left:3px;top:1003px;width:1638px;height:18px;background:#f0f0f0"></div><div style="left:3px;top:1003px;width:1620px;height:1px;background:#fff"></div><div style="left:21px;top:1004px;width:1585px;height:15px;background:#cdcdcd"></div><svg style="left:9px;top:1006px;" width="8" height="11" viewBox="0 0 8 11"><path d="M6.500 2l-4 3.500 4 3.500" fill="none" stroke="#404040" stroke-width="2"/></svg><svg style="left:1611px;top:1006px;" width="8" height="11" viewBox="0 0 8 11"><path d="M1.500 2l4 3.500-4 3.500" fill="none" stroke="#404040" stroke-width="2"/></svg><div style="left:1641px;top:113px;width:1px;height:908px;background:#fff"></div><div style="left:1642px;top:113px;width:5px;height:908px;background:#f0f0f0"></div><svg style="left:1643px;top:548px;" width="3" height="36" viewBox="0 0 3 36"><rect x="0" y="0" width="2" height="1" fill="#777"/><rect x="0" y="1" width="1" height="1" fill="#777"/><rect x="0" y="4" width="2" height="1" fill="#777"/><rect x="0" y="5" width="1" height="1" fill="#777"/><rect x="0" y="8" width="2" height="1" fill="#777"/><rect x="0" y="9" width="1" height="1" fill="#777"/><rect x="0" y="12" width="2" height="1" fill="#777"/><rect x="0" y="13" width="1" height="1" fill="#777"/><rect x="0" y="16" width="2" height="1" fill="#777"/><rect x="0" y="17" width="1" height="1" fill="#777"/><rect x="0" y="20" width="2" height="1" fill="#777"/><rect x="0" y="21" width="1" height="1" fill="#777"/><rect x="0" y="24" width="2" height="1" fill="#777"/><rect x="0" y="25" width="1" height="1" fill="#777"/><rect x="0" y="28" width="2" height="1" fill="#777"/><rect x="0" y="29" width="1" height="1" fill="#777"/><rect x="0" y="32" width="2" height="1" fill="#777"/><rect x="0" y="33" width="1" height="1" fill="#777"/></svg><div style="left:1642px;top:1020px;width:5px;height:1px;background:#a0a0a0"></div><div style="left:3px;top:113px;width:1px;height:907px;background:#a4a4a4"></div><div style="left:4px;top:112px;width:1px;height:908px;background:#6e6e6e"></div><div style="left:5px;top:113px;width:1px;height:907px;background:#fff"></div>
<!-- p_sidebar -->
<div style="left:1647px;top:113px;width:275px;height:909px;background:#f0f0f0"></div><div style="left:1647px;top:113px;width:1px;height:908px;background:#9a9a9a"></div><div style="left:1648px;top:113px;width:1px;height:908px;background:#fff"></div><div style="left:1647px;top:1020px;width:275px;height:1px;background:#a0a0a0"></div><div style="left:1647px;top:1021px;width:275px;height:1px;background:#fff"></div><div style="left:1651px;top:115px;width:233px;height:903px;background:#f0f0f0;border:1px solid #e1e1e1"></div><span class="t" style="left:1662px;top:124px;font-size:12px;line-height:12px;color:#101828;font-weight:bold;letter-spacing:-0.286px;">Vlastnosti</span><svg style="left:1868px;top:122px;" width="11" height="11" viewBox="0 0 11 11"><path d="M1.500 1.500l8 8M9.500 1.500l-8 8" stroke="#444" stroke-width="1.700"/></svg><div style="left:1652px;top:142px;width:231px;height:28px;background:linear-gradient(#dedede,#efefef 80%,#f0f0f0)"></div><div style="left:1652px;top:278px;width:231px;height:28px;background:linear-gradient(#dedede,#efefef 80%,#f0f0f0)"></div><div style="left:1652px;top:534px;width:231px;height:28px;background:linear-gradient(#dedede,#efefef 80%,#f0f0f0)"></div><div style="left:1652px;top:562px;width:231px;height:1px;background:#e4e4e4"></div><svg style="left:1657px;top:151px;" width="9" height="9" viewBox="0 0 9 9"><rect x=".5" y=".5" width="8" height="8" fill="#fcfcfc" stroke="#7a7a7a"/><path d="M2.500 4.500h4" stroke="#222" stroke-width="1"/></svg><span class="t" style="left:1671px;top:151px;font-size:12px;line-height:12px;color:#101828;font-weight:bold;letter-spacing:0.551px;">Text</span><svg style="left:1866px;top:148px;" width="12" height="11" viewBox="0 0 12 11"><rect x=".5" y=".5" width="11" height="10" fill="#fff" stroke="#3a62b0"/><rect x="1" y="1" width="10" height="2.500" fill="#8faee0"/><path d="M3 7.500h1M5.500 7.500h1M8 7.500h1" stroke="#2a4a90" stroke-width="1.200"/></svg><svg style="left:1657px;top:287px;" width="9" height="9" viewBox="0 0 9 9"><rect x=".5" y=".5" width="8" height="8" fill="#fcfcfc" stroke="#7a7a7a"/><path d="M2.500 4.500h4" stroke="#222" stroke-width="1"/></svg><span class="t" style="left:1671px;top:287px;font-size:12px;line-height:12px;color:#101828;font-weight:bold;letter-spacing:-0.254px;">Odstavec</span><svg style="left:1866px;top:284px;" width="12" height="11" viewBox="0 0 12 11"><rect x=".5" y=".5" width="11" height="10" fill="#fff" stroke="#3a62b0"/><rect x="1" y="1" width="10" height="2.500" fill="#8faee0"/><path d="M3 7.500h1M5.500 7.500h1M8 7.500h1" stroke="#2a4a90" stroke-width="1.200"/></svg><svg style="left:1657px;top:543px;" width="9" height="9" viewBox="0 0 9 9"><rect x=".5" y=".5" width="8" height="8" fill="#fcfcfc" stroke="#7a7a7a"/><path d="M2.500 4.500h4" stroke="#222" stroke-width="1"/><path d="M4.500 2.500v4" stroke="#222" stroke-width="1"/></svg><span class="t" style="left:1671px;top:543px;font-size:12px;line-height:12px;color:#101828;font-weight:bold;letter-spacing:-0.060px;">Strana</span><svg style="left:1866px;top:540px;" width="12" height="11" viewBox="0 0 12 11"><rect x=".5" y=".5" width="11" height="10" fill="#fff" stroke="#3a62b0"/><rect x="1" y="1" width="10" height="2.500" fill="#8faee0"/><path d="M3 7.500h1M5.500 7.500h1M8 7.500h1" stroke="#2a4a90" stroke-width="1.200"/></svg><div class="combo" style="left:1658px;top:171px;width:158px;height:23px;"></div><div class="cbtn" style="left:1797px;top:173px;width:17px;height:19px;"></div><svg style="left:1800px;top:179px;" width="11" height="7" viewBox="0 0 11 7"><path d="M1.500 1.500l4 4 4-4" fill="none" stroke="#444" stroke-width="1.100"/></svg><span class="t" style="left:1661.5px;top:177px;font-size:12px;line-height:12px;color:#000;letter-spacing:-0.105px;">Times New Roman</span><div style="left:1921px;top:111px;width:1px;height:910px;background:#a0a0a0"></div><div class="combo" style="left:1822px;top:171px;width:52px;height:23px;"></div><div class="cbtn" style="left:1855px;top:173px;width:17px;height:19px;"></div><svg style="left:1858px;top:179px;" width="11" height="7" viewBox="0 0 11 7"><path d="M1.500 1.500l4 4 4-4" fill="none" stroke="#444" stroke-width="1.100"/></svg><span class="t" style="left:1825.5px;top:177px;font-size:12px;line-height:12px;color:#000;letter-spacing:-0.180px;">12</span><div style="left:1921px;top:111px;width:1px;height:910px;background:#a0a0a0"></div><div style="left:1658px;top:203px;width:140px;height:31px;background:linear-gradient(#f3f3f3,#fdfdfd);border:1px solid #e2e2e2"></div><div style="left:1822px;top:203px;width:54px;height:31px;background:linear-gradient(#f3f3f3,#fdfdfd);border:1px solid #e2e2e2"></div><span class="t" style="left:1666.5px;top:212px;font-size:16px;line-height:16px;color:#1f3050;font-weight:bold;transform:scaleX(.8);transform-origin:0 0;-webkit-text-stroke:.35px #1f3050;">B</span><span class="t" style="left:1692.0px;top:211px;font-size:16px;line-height:16px;color:#1f3050;font-family:'Liberation Serif',serif;font-weight:bold;font-style:italic;transform:scaleX(1.15) skewX(-8deg);transform-origin:0 100%;">I</span><span class="t" style="left:1716px;top:210px;font-size:14px;line-height:14px;color:#1f3050;transform:scaleX(1.02);transform-origin:0 0;">U</span><div style="left:1715px;top:223px;width:12px;height:1px;background:#1f3050"></div><div style="left:1738px;top:216px;width:5px;height:1px;background:#000"></div><div style="left:1739px;top:217px;width:3px;height:1px;background:#000"></div><div style="left:1740px;top:218px;width:1px;height:1px;background:#000"></div><svg style="left:1750px;top:211px;" width="16" height="12" viewBox="0 0 16 12"><text x="8" y="9.500" font-family="Liberation Sans" font-weight="bold" font-size="7.600" fill="#1f3050" text-anchor="middle">ABC</text><path d="M0 6.500h16" stroke="#1f3050" stroke-width="1"/></svg><svg style="left:1774px;top:209px;" width="18" height="18" viewBox="0 0 18 18"><text x="11" y="16" font-family="Liberation Sans" font-weight="bold" font-size="14" fill="#9a9a9a" text-anchor="middle">A</text><text x="7" y="13" font-family="Liberation Sans" font-weight="bold" font-size="14" fill="#3f7cb8" stroke="#1a3a60" stroke-width=".5" text-anchor="middle">A</text></svg><svg style="left:1827px;top:209px;" width="17" height="17" viewBox="0 0 17 17"><rect x=".5" y="2.500" width="3" height="14" fill="#d8dde4" stroke="#6a7482" stroke-width=".8"/><path d="M.5 5.500h1.500M.5 8.500h1.500M.5 11.500h1.500" stroke="#555" stroke-width=".6"/><text x="10.500" y="16.500" font-family="Liberation Sans" font-weight="bold" font-size="12" fill="#3f7cb8" stroke="#1a3a60" stroke-width=".5" text-anchor="middle">A</text><path d="M9 3.500l3-3 3 3z" fill="#f08a28" stroke="#a0380a" stroke-width=".6"/></svg><svg style="left:1852px;top:209px;" width="17" height="17" viewBox="0 0 17 17"><rect x=".5" y="2.500" width="3" height="14" fill="#d8dde4" stroke="#6a7482" stroke-width=".8"/><path d="M.5 5.500h1.500M.5 8.500h1.500M.5 11.500h1.500" stroke="#555" stroke-width=".6"/><text x="10.500" y="16.500" font-family="Liberation Sans" font-weight="bold" font-size="12" fill="#3f7cb8" stroke="#1a3a60" stroke-width=".5" text-anchor="middle">A</text><path d="M9 .800l3 3 3-3z" fill="#f08a28" stroke="#a0380a" stroke-width=".6"/></svg><div style="left:1658px;top:244px;width:54px;height:31px;background:linear-gradient(#f3f3f3,#fdfdfd);border:1px solid #e2e2e2"></div><div style="left:1720px;top:244px;width:40px;height:31px;background:linear-gradient(#f3f3f3,#fdfdfd);border:1px solid #e2e2e2"></div><div style="left:1777px;top:244px;width:40px;height:31px;background:linear-gradient(#f3f3f3,#fdfdfd);border:1px solid #e2e2e2"></div><div style="left:1822px;top:244px;width:40px;height:31px;background:linear-gradient(#f3f3f3,#fdfdfd);border:1px solid #e2e2e2"></div><svg style="left:1664px;top:250px;" width="17" height="18" viewBox="0 0 17 18"><text x="5" y="15" font-family="Liberation Sans" font-weight="bold" font-size="13" fill="#76828e" text-anchor="middle">A</text><text x="12" y="10" font-family="Liberation Sans" font-weight="bold" font-size="9.500" fill="#3f7cb8" stroke="#1a3a60" stroke-width=".4" text-anchor="middle">A</text><path d="M10 16l3-3 3 3z" fill="#f08a28" stroke="#a0380a" stroke-width=".6"/></svg><svg style="left:1689px;top:250px;" width="17" height="18" viewBox="0 0 17 18"><text x="5" y="15" font-family="Liberation Sans" font-weight="bold" font-size="13" fill="#76828e" text-anchor="middle">A</text><text x="12" y="15" font-family="Liberation Sans" font-weight="bold" font-size="9.500" fill="#3f7cb8" stroke="#1a3a60" stroke-width=".4" text-anchor="middle">A</text><path d="M10 1l3 3 3-3z" fill="#f08a28" stroke="#a0380a" stroke-width=".6"/></svg><svg style="left:1725px;top:251px;" width="16" height="17" viewBox="0 0 16 17"><text x="3.500" y="8" font-family="Liberation Sans" font-weight="bold" font-size="8.500" fill="#2a4a6a" text-anchor="middle">A</text><text x="12.500" y="8" font-family="Liberation Sans" font-weight="bold" font-size="8.500" fill="#2a4a6a" text-anchor="middle">V</text><path d="M6 .5l4.500 10" stroke="#d81818" stroke-width="1.200"/><path d="M.8 13l3.500-3v2h7.400v-2l3.500 3-3.500 3v-2H4.300v2z" fill="#8cc0f0" stroke="#1f5fa8" stroke-width=".8"/></svg><div style="left:1749px;top:257px;width:5px;height:1px;background:#000"></div><div style="left:1750px;top:258px;width:3px;height:1px;background:#000"></div><div style="left:1751px;top:259px;width:1px;height:1px;background:#000"></div><svg style="left:1782px;top:250px;" width="17" height="17" viewBox="0 0 17 17"><text x="8.500" y="11.500" font-family="Liberation Sans" font-weight="bold" font-size="14" fill="#3f7cb8" stroke="#1a3a60" stroke-width=".7" text-anchor="middle">A</text><rect x="0" y="13" width="17" height="3.500" fill="#800000"/></svg><div style="left:1806px;top:257px;width:5px;height:1px;background:#000"></div><div style="left:1807px;top:258px;width:3px;height:1px;background:#000"></div><div style="left:1808px;top:259px;width:1px;height:1px;background:#000"></div><svg style="left:1827px;top:250px;" width="17" height="17" viewBox="0 0 16 16"><rect x="0" y="1" width="9" height="9" fill="#ffe818"/><text x="4.300" y="8.500" font-family="Liberation Sans" font-size="9" fill="#333" text-anchor="middle">ab</text><path d="M7 11.500l1-3 5.500-6 2 1.800-5.500 6z" fill="#d8dde2" stroke="#555" stroke-width=".7"/><path d="M7 11.500l.600-1.800 1.400 1.200z" fill="#d04a10"/><rect x="0" y="13" width="16" height="3" fill="#ffff00"/></svg><div style="left:1851px;top:257px;width:5px;height:1px;background:#000"></div><div style="left:1852px;top:258px;width:3px;height:1px;background:#000"></div><div style="left:1853px;top:259px;width:1px;height:1px;background:#000"></div><div style="left:1658px;top:305px;width:104px;height:31px;background:linear-gradient(#f3f3f3,#fdfdfd);border:1px solid #e2e2e2"></div><div style="left:1660px;top:307px;width:25px;height:26px;background:linear-gradient(#c4ddf3,#cfe6f9);border:1px solid #9ccdf9"></div><div style="left:1666px;top:316px;width:12px;height:1px;background:#1f2b3d"></div><div style="left:1666px;top:318px;width:9px;height:1px;background:#1f2b3d"></div><div style="left:1666px;top:320px;width:12px;height:1px;background:#1f2b3d"></div><div style="left:1666px;top:322px;width:9px;height:1px;background:#1f2b3d"></div><div style="left:1666px;top:324px;width:12px;height:1px;background:#1f2b3d"></div><div style="left:1691px;top:316px;width:12px;height:1px;background:#1f2b3d"></div><div style="left:1694px;top:318px;width:6px;height:1px;background:#1f2b3d"></div><div style="left:1691px;top:320px;width:12px;height:1px;background:#1f2b3d"></div><div style="left:1694px;top:322px;width:6px;height:1px;background:#1f2b3d"></div><div style="left:1691px;top:324px;width:12px;height:1px;background:#1f2b3d"></div><div style="left:1716px;top:316px;width:12px;height:1px;background:#1f2b3d"></div><div style="left:1719px;top:318px;width:9px;height:1px;background:#1f2b3d"></div><div style="left:1716px;top:320px;width:12px;height:1px;background:#1f2b3d"></div><div style="left:1719px;top:322px;width:9px;height:1px;background:#1f2b3d"></div><div style="left:1716px;top:324px;width:12px;height:1px;background:#1f2b3d"></div><div style="left:1741px;top:316px;width:12px;height:1px;background:#1f2b3d"></div><div style="left:1741px;top:318px;width:12px;height:1px;background:#1f2b3d"></div><div style="left:1741px;top:320px;width:12px;height:1px;background:#1f2b3d"></div><div style="left:1741px;top:322px;width:12px;height:1px;background:#1f2b3d"></div><div style="left:1741px;top:324px;width:12px;height:1px;background:#1f2b3d"></div><div style="left:1658px;top:341px;width:76px;height:31px;background:linear-gradient(#f3f3f3,#fdfdfd);border:1px solid #e2e2e2"></div><div style="left:1753px;top:341px;width:54px;height:31px;background:linear-gradient(#f3f3f3,#fdfdfd);border:1px solid #e2e2e2"></div><svg style="left:1663px;top:348px;" width="16" height="16" viewBox="0 0 16 16"><circle cx="3" cy="4.500" r="1.700" fill="#fff" stroke="#2a5a96" stroke-width="1.100"/><circle cx="3" cy="12" r="1.700" fill="#fff" stroke="#2a5a96" stroke-width="1.100"/><path d="M7 3.500h8M7 6.500h5.500M7 10.500h8M7 13.500h6" stroke="#2a2a2a" stroke-width="1"/></svg><div style="left:1688px;top:355px;width:5px;height:1px;background:#000"></div><div style="left:1689px;top:356px;width:3px;height:1px;background:#000"></div><div style="left:1690px;top:357px;width:1px;height:1px;background:#000"></div><svg style="left:1700px;top:348px;" width="16" height="16" viewBox="0 0 16 16"><path d="M1 2.500h3M2.500 2.500v4M1 6.500h3M.5 9.500h4M1.500 9.500v4M3.500 9.500v4M.5 13.500h4" stroke="#2a6aa6" stroke-width="1"/><path d="M8 3.500h8M8 6.500h5.500M8 10.500h8M8 13.500h6" stroke="#2a2a2a" stroke-width="1"/></svg><div style="left:1724px;top:355px;width:5px;height:1px;background:#000"></div><div style="left:1725px;top:356px;width:3px;height:1px;background:#000"></div><div style="left:1726px;top:357px;width:1px;height:1px;background:#000"></div><svg style="left:1757px;top:347px;" width="15" height="18" viewBox="0 0 15 18"><path d="M2 9l6-6 5 7-5.500 6z" fill="#9cc4f0" stroke="#2a5a9a" stroke-width=".9"/><path d="M6 6V2.500q1.500-2 3 0V7" fill="none" stroke="#6a7a90" stroke-width=".9"/><path d="M11 5q4 3 2.500 9" fill="none" stroke="#333" stroke-width="1.600"/></svg><div style="left:1773px;top:348px;width:15px;height:17px;background:#fff;border:1px solid #3a5a9a;box-shadow:inset 0 0 0 1px #fff,inset 0 0 0 2.500px #222"></div><div style="left:1797px;top:355px;width:5px;height:1px;background:#000"></div><div style="left:1798px;top:356px;width:3px;height:1px;background:#000"></div><div style="left:1799px;top:357px;width:1px;height:1px;background:#000"></div><span class="t" style="left:1658px;top:376px;font-size:12px;line-height:12px;color:#000;letter-spacing:-0.448px;">Rozestup:</span><span class="t" style="left:1774px;top:376px;font-size:12px;line-height:12px;color:#000;letter-spacing:-0.523px;">Odsazení:</span><div style="left:1658px;top:391px;width:54px;height:31px;background:linear-gradient(#f3f3f3,#fdfdfd);border:1px solid #e2e2e2"></div><div style="left:1773px;top:391px;width:84px;height:31px;background:linear-gradient(#f3f3f3,#fdfdfd);border:1px solid #e2e2e2"></div><svg style="left:1664px;top:398px;" width="17" height="17" viewBox="0 0 17 17"><path d="M1 5.500l3-3.500 3 3.500z" fill="#7fc0f0" stroke="#1f4f90" stroke-width=".8"/><path d="M1 10.500l3 3.500 3-3.500z" fill="#7fc0f0" stroke="#1f4f90" stroke-width=".8"/><path d="M8.5 2.5H16.5" stroke="#1f3050" stroke-width="1.1"/><path d="M8.5 4.5H16.5" stroke="#1f3050" stroke-width="1.1"/><path d="M8.5 6.5H16.5" stroke="#1f3050" stroke-width="1.1"/><path d="M8.5 10.5H16.5" stroke="#1f3050" stroke-width="1.1"/><path d="M8.5 12.5H16.5" stroke="#1f3050" stroke-width="1.1"/><path d="M8.5 14.5H16.5" stroke="#1f3050" stroke-width="1.1"/></svg><svg style="left:1689px;top:398px;" width="17" height="17" viewBox="0 0 17 17"><path d="M1 2.500l3 3.500 3-3.500z" fill="#7fc0f0" stroke="#1f4f90" stroke-width=".8"/><path d="M1 13.500l3-3.500 3 3.500z" fill="#7fc0f0" stroke="#1f4f90" stroke-width=".8"/><path d="M8.5 3.5H16.5" stroke="#1f3050" stroke-width="1.1"/><path d="M8.5 5.5H16.5" stroke="#1f3050" stroke-width="1.1"/><path d="M8.5 7.5H16.5" stroke="#1f3050" stroke-width="1.1"/><path d="M8.5 9.5H16.5" stroke="#1f3050" stroke-width="1.1"/><path d="M8.5 11.5H16.5" stroke="#1f3050" stroke-width="1.1"/><path d="M8.5 13.5H16.5" stroke="#1f3050" stroke-width="1.1"/></svg><svg style="left:1779px;top:398px;" width="16" height="16" viewBox="0 0 16 16"><path d="M8.500 1v14" stroke="#444" stroke-width="1" stroke-dasharray="1 1"/><path d="M6.500 3.500h10M6.500 13.500h10" stroke="#333" stroke-width="1"/><rect x="10" y="5.500" width="6.500" height="2" fill="#1f7fd0"/><rect x="10" y="9.500" width="5" height="2" fill="#1f7fd0"/><path d="M8.500 8.500L4.500 5v2H1v3h3.500v2z" fill="#f0641a" stroke="#8a2a08" stroke-width=".8" stroke-linejoin="round"/></svg><svg style="left:1804px;top:398px;" width="16" height="16" viewBox="0 0 16 16"><path d="M8.500 1v14" stroke="#444" stroke-width="1" stroke-dasharray="1 1"/><path d="M6.500 3.500h10M6.500 13.500h10" stroke="#333" stroke-width="1"/><rect x="10" y="5.500" width="6.500" height="2" fill="#1f7fd0"/><rect x="10" y="9.500" width="5" height="2" fill="#1f7fd0"/><path d="M.5 8.500L4.500 5v2h3.500v3H4.500v2z" fill="#f0641a" stroke="#8a2a08" stroke-width=".8" stroke-linejoin="round"/></svg><svg style="left:1829px;top:398px;" width="22" height="18" viewBox="0 0 22 18"><path d="M.5 5.500l0 0h3V2.500L8 7l-4.500 4.500V8.500h-3z" fill="#8fd838" stroke="#3a8a10" stroke-width=".8"/><path d="M9.500 4.500h4M9.500 3v3M13.500 3v3" stroke="#1f4f90" stroke-width=".9"/><path d="M15 3.5H21" stroke="#3a6ab0" stroke-width="1"/><path d="M15 5.5H21" stroke="#3a6ab0" stroke-width="1"/><path d="M15 7.5H21" stroke="#3a6ab0" stroke-width="1"/><path d="M15 9.5H21" stroke="#3a6ab0" stroke-width="1"/><path d="M15 11.5H21" stroke="#3a6ab0" stroke-width="1"/><path d="M15 13.5H21" stroke="#3a6ab0" stroke-width="1"/><path d="M15 15.5H21" stroke="#3a6ab0" stroke-width="1"/><path d="M15 17H21" stroke="#3a6ab0" stroke-width="1"/></svg><div class="combo" style="left:1679px;top:433px;width:88px;height:23px;"></div><div class="cbtn" style="left:1750px;top:435px;width:15px;height:10px;"></div><div class="cbtn" style="left:1750px;top:444px;width:15px;height:10px;"></div><div style="left:1757px;top:438px;width:1px;height:1px;background:#000"></div><div style="left:1756px;top:439px;width:3px;height:1px;background:#000"></div><div style="left:1755px;top:440px;width:5px;height:1px;background:#000"></div><div style="left:1755px;top:448px;width:5px;height:1px;background:#000"></div><div style="left:1756px;top:449px;width:3px;height:1px;background:#000"></div><div style="left:1757px;top:450px;width:1px;height:1px;background:#000"></div><span class="t" style="left:1682px;top:439px;font-size:12px;line-height:12px;color:#000;letter-spacing:-0.312px;">0,00 cm</span><div style="left:1921px;top:111px;width:1px;height:910px;background:#a0a0a0"></div><div class="combo" style="left:1794px;top:433px;width:82px;height:23px;"></div><div class="cbtn" style="left:1859px;top:435px;width:15px;height:10px;"></div><div class="cbtn" style="left:1859px;top:444px;width:15px;height:10px;"></div><div style="left:1866px;top:438px;width:1px;height:1px;background:#000"></div><div style="left:1865px;top:439px;width:3px;height:1px;background:#000"></div><div style="left:1864px;top:440px;width:5px;height:1px;background:#000"></div><div style="left:1864px;top:448px;width:5px;height:1px;background:#000"></div><div style="left:1865px;top:449px;width:3px;height:1px;background:#000"></div><div style="left:1866px;top:450px;width:1px;height:1px;background:#000"></div><span class="t" style="left:1797px;top:439px;font-size:12px;line-height:12px;color:#000;letter-spacing:-0.312px;">0,00 cm</span><div style="left:1921px;top:111px;width:1px;height:910px;background:#a0a0a0"></div><div class="combo" style="left:1679px;top:464px;width:88px;height:23px;"></div><div class="cbtn" style="left:1750px;top:466px;width:15px;height:10px;"></div><div class="cbtn" style="left:1750px;top:475px;width:15px;height:10px;"></div><div style="left:1757px;top:469px;width:1px;height:1px;background:#000"></div><div style="left:1756px;top:470px;width:3px;height:1px;background:#000"></div><div style="left:1755px;top:471px;width:5px;height:1px;background:#000"></div><div style="left:1755px;top:479px;width:5px;height:1px;background:#000"></div><div style="left:1756px;top:480px;width:3px;height:1px;background:#000"></div><div style="left:1757px;top:481px;width:1px;height:1px;background:#000"></div><span class="t" style="left:1682px;top:470px;font-size:12px;line-height:12px;color:#000;letter-spacing:-0.312px;">0,00 cm</span><div style="left:1921px;top:111px;width:1px;height:910px;background:#a0a0a0"></div><div class="combo" style="left:1794px;top:464px;width:82px;height:23px;"></div><div class="cbtn" style="left:1859px;top:466px;width:15px;height:10px;"></div><div class="cbtn" style="left:1859px;top:475px;width:15px;height:10px;"></div><div style="left:1866px;top:469px;width:1px;height:1px;background:#000"></div><div style="left:1865px;top:470px;width:3px;height:1px;background:#000"></div><div style="left:1864px;top:471px;width:5px;height:1px;background:#000"></div><div style="left:1864px;top:479px;width:5px;height:1px;background:#000"></div><div style="left:1865px;top:480px;width:3px;height:1px;background:#000"></div><div style="left:1866px;top:481px;width:1px;height:1px;background:#000"></div><span class="t" style="left:1797px;top:470px;font-size:12px;line-height:12px;color:#000;letter-spacing:-0.312px;">0,00 cm</span><div style="left:1921px;top:111px;width:1px;height:910px;background:#a0a0a0"></div><div class="combo" style="left:1794px;top:496px;width:82px;height:23px;"></div><div class="cbtn" style="left:1859px;top:498px;width:15px;height:10px;"></div><div class="cbtn" style="left:1859px;top:507px;width:15px;height:10px;"></div><div style="left:1866px;top:501px;width:1px;height:1px;background:#000"></div><div style="left:1865px;top:502px;width:3px;height:1px;background:#000"></div><div style="left:1864px;top:503px;width:5px;height:1px;background:#000"></div><div style="left:1864px;top:511px;width:5px;height:1px;background:#000"></div><div style="left:1865px;top:512px;width:3px;height:1px;background:#000"></div><div style="left:1866px;top:513px;width:1px;height:1px;background:#000"></div><span class="t" style="left:1797px;top:502px;font-size:12px;line-height:12px;color:#000;letter-spacing:-0.312px;">0,00 cm</span><div style="left:1921px;top:111px;width:1px;height:910px;background:#a0a0a0"></div><svg style="left:1657px;top:437px;" width="17" height="18" viewBox="0 0 17 18"><path d="M6.500 1.500h4M8.500 1.500v5M6.500 6.500h4" stroke="#2d4a80" stroke-width="1"/><path d="M1 9.5H16" stroke="#2d4a80" stroke-width="1.5"/><path d="M1 12.5H16" stroke="#2d4a80" stroke-width="1.5"/><path d="M1 15.5H16" stroke="#2d4a80" stroke-width="1.5"/></svg><svg style="left:1657px;top:467px;" width="17" height="18" viewBox="0 0 17 18"><path d="M1 1.5H16" stroke="#2d4a80" stroke-width="1.5"/><path d="M1 4.5H16" stroke="#2d4a80" stroke-width="1.5"/><path d="M1 7.5H16" stroke="#2d4a80" stroke-width="1.5"/><path d="M6.500 10.500h4M8.500 10.500v5M6.500 15.500h4" stroke="#2d4a80" stroke-width="1"/></svg><svg style="left:1772px;top:438px;" width="17" height="17" viewBox="0 0 17 17"><path d="M1 2.500h6M1 1v3M7 1v3" stroke="#2d4a80" stroke-width="1"/><path d="M9 2.5H16" stroke="#2d4a80" stroke-width="1.5"/><path d="M9 5.5H16" stroke="#2d4a80" stroke-width="1.5"/><path d="M9 8.5H16" stroke="#2d4a80" stroke-width="1.5"/><path d="M9 11.5H16" stroke="#2d4a80" stroke-width="1.5"/><path d="M9 14.5H16" stroke="#2d4a80" stroke-width="1.5"/></svg><svg style="left:1772px;top:469px;" width="17" height="17" viewBox="0 0 17 17"><path d="M10 2.500h6M10 1v3M16 1v3" stroke="#2d4a80" stroke-width="1"/><path d="M1 2.5H8" stroke="#2d4a80" stroke-width="1.5"/><path d="M1 5.5H8" stroke="#2d4a80" stroke-width="1.5"/><path d="M1 8.5H8" stroke="#2d4a80" stroke-width="1.5"/><path d="M1 11.5H8" stroke="#2d4a80" stroke-width="1.5"/><path d="M1 14.5H8" stroke="#2d4a80" stroke-width="1.5"/></svg><svg style="left:1772px;top:500px;" width="17" height="17" viewBox="0 0 17 17"><path d="M1 2.500h5M1 1v3M6 1v3" stroke="#2d4a80" stroke-width="1"/><path d="M8 2.5H16" stroke="#2d4a80" stroke-width="1.5"/><path d="M1 5.5H16" stroke="#2d4a80" stroke-width="1.5"/><path d="M1 8.5H16" stroke="#2d4a80" stroke-width="1.5"/><path d="M1 11.5H16" stroke="#2d4a80" stroke-width="1.5"/><path d="M1 14.5H16" stroke="#2d4a80" stroke-width="1.5"/></svg><div style="left:1658px;top:494px;width:42px;height:31px;background:linear-gradient(#f3f3f3,#fdfdfd);border:1px solid #e2e2e2"></div><svg style="left:1663px;top:501px;" width="17" height="17" viewBox="0 0 17 17"><path d="M3.500 1v15M1 4l2.500-3 2.500 3M1 13l2.500 3 2.500-3" fill="none" stroke="#2d4a80" stroke-width="1.300"/><path d="M8 4.5H16.5" stroke="#2d4a80" stroke-width="1.5"/><path d="M8 8.5H16.5" stroke="#2d4a80" stroke-width="1.5"/><path d="M8 12.5H16.5" stroke="#2d4a80" stroke-width="1.5"/></svg><div style="left:1689px;top:508px;width:5px;height:1px;background:#000"></div><div style="left:1690px;top:509px;width:3px;height:1px;background:#000"></div><div style="left:1691px;top:510px;width:1px;height:1px;background:#000"></div><svg style="left:1897px;top:125px;" width="14" height="12" viewBox="0 0 14 12"><path d="M1 1.500h8M1 4.500h8M1 7.500h6" stroke="#1f3050" stroke-width="1.200"/><path d="M8 8h5l-2.500 3z" fill="#1f3050"/></svg><div style="left:1890px;top:150px;width:26px;height:1px;background:#dcdcdc"></div><div style="left:1887px;top:154px;width:32px;height:32px;background:#f7f7f7;border:1px solid #b8b8b8;border-radius:3px"></div><svg style="left:1892px;top:158px;" width="22" height="26" viewBox="0 0 22 26"><ellipse cx="10.500" cy="23" rx="9" ry="1.500" fill="#c4c4c4"/><path d="M10.500 .5L20.500 5.500 10.500 10.500 .5 5.500z" fill="#5cc0ff"/><path d="M10.500 .5L20.500 5.500 15.500 8 5.500 3z" fill="#5cc0ff"/><path d="M15.500 3L20.500 5.500 15.500 8 10.500 5.500z" fill="#b4ee60"/><path d="M.5 5.500L10.500 10.500V21.500L.5 16.500z" fill="#1e8ae6"/><path d="M.5 11L10.500 16V21.500L.5 16.500z" fill="#7ed321"/><path d="M.5 11L5.500 13.500V19L.5 16.500z" fill="#1e8ae6"/><path d="M10.500 10.500L20.500 5.500V16.500L10.500 21.500z" fill="#6cc41a"/><path d="M15.500 8L20.500 5.500V11L15.500 13.500z" fill="#8fe030"/><path d="M5.500 3L15.500 8V19M15.500 3L5.500 8V19M.5 11L10.500 16 20.500 11M10.500 10.500V21.500" fill="none" stroke="#fff" stroke-width=".9" opacity=".9"/></svg><svg style="left:1890px;top:190px;" width="26" height="28" viewBox="0 0 26 28"><path d="M8 8l14 7-12 9z" fill="#1f70c8"/><path d="M9 10q6-4 10 3-3 6-8 3z" fill="#14344f"/><path d="M15 14q6 0 6 6-2 4-6 3z" fill="#7fc82a"/><path d="M5 3q4-2 6 1l-2 5z" fill="#c87a1a"/><path d="M19 1l1 2 2 .3-1.500 1.500.4 2.200-1.900-1-1.900 1 .4-2.200L16 3.300l2-.3z" fill="#f8d030"/><path d="M12 2l.8 1.600 1.700.2-1.200 1.200.3 1.800L12 6l-1.600.8.300-1.800-1.200-1.200 1.700-.2z" fill="#c050d0"/><path d="M4 10l.8 1.600 1.700.2-1.200 1.200.3 1.800L4 14l-1.600.8.300-1.800-1.200-1.200 1.700-.2z" fill="#f050a0"/><path d="M23 9l.7 1.400 1.500.2-1.100 1.100.3 1.500L23 12.500l-1.400.7.300-1.500-1.100-1.100 1.500-.2z" fill="#f05060"/><ellipse cx="13" cy="26.500" rx="9" ry="1" fill="#bbb"/></svg><svg style="left:1889px;top:225px;" width="28" height="28" viewBox="0 0 28 28"><path d="M2 8l16-6 7 14-16 7z" fill="#fff" stroke="#b8c0c8" stroke-width="1"/><path d="M5 9.500l12-4.500 5 10-12 4.800z" fill="#7fc4f0"/><path d="M8 17l14-3-.5 1.500-11 4.500z" fill="#5fb030"/><path d="M8 12l3-2 3 2v4l-5 1.500z" fill="#fff" stroke="#3a5a90" stroke-width=".8"/><path d="M17 10l3 5-4 1z" fill="#e8a848"/><ellipse cx="14" cy="26.500" rx="9" ry="1" fill="#bbb"/></svg><svg style="left:1890px;top:260px;" width="26" height="30" viewBox="0 0 26 30"><circle cx="13" cy="14" r="9.600" fill="#fff" stroke="#f09a18" stroke-width="2.600"/><circle cx="13" cy="14" r="11" fill="none" stroke="#b86a08" stroke-width=".5"/><path d="M18.500 8l-4 8-3-3z" fill="#2a62d8"/><path d="M7.500 20l4-8 3 3z" fill="#e02828"/><text x="13" y="8" font-size="5" font-family="Liberation Sans" font-weight="bold" text-anchor="middle" fill="#333">N</text><ellipse cx="13" cy="28.500" rx="9" ry="1" fill="#bbb"/></svg><div style="left:1921px;top:111px;width:1px;height:910px;background:#a0a0a0"></div>
<!-- p_dialog -->
<div style="left:685px;top:332px;width:555px;height:379px;background:#f0f0f0;border:1px solid #9a9a9a;border-right-color:#d0d0d0;border-bottom-color:#d0d0d0;box-shadow:2px 4px 14px rgba(0,0,0,.42),0 0 5px rgba(0,0,0,.2)"></div><div style="left:686px;top:333px;width:553px;height:25px;background:#fff"></div><span class="t" style="left:689.5px;top:339px;font-size:12px;line-height:12px;color:#8a8a8a;letter-spacing:-0.179px;">Překlepy: [žádný]</span><svg style="left:1219px;top:339px;" width="12" height="12" viewBox="0 0 12 12"><path d="M1 1l10 10M11 1L1 11" stroke="#444" stroke-width="1"/></svg><span class="t" style="left:698px;top:375px;font-size:12px;line-height:12px;color:#000;letter-spacing:-0.457px;"><u>J</u>azyk textu</span><div class="combo" style="left:912px;top:369px;width:191px;height:23px;"></div><div class="cbtn" style="left:1084px;top:371px;width:17px;height:19px;"></div><svg style="left:1087px;top:377px;" width="11" height="7" viewBox="0 0 11 7"><path d="M1.500 1.500l4 4 4-4" fill="none" stroke="#444" stroke-width="1.100"/></svg><div style="left:688px;top:397px;width:549px;height:274px;border-top:1px solid #dcdcdc;border-left:1px solid #dcdcdc;border-right:1px solid #6a6a6a;border-bottom:1px solid #6a6a6a"></div><div style="left:689px;top:398px;width:547px;height:272px;border-top:1px solid #fff;border-left:1px solid #fff;border-right:1px solid #a8a8a8;border-bottom:1px solid #a8a8a8"></div><span class="t" style="left:698px;top:409px;font-size:12px;line-height:12px;color:#000;letter-spacing:-0.107px;"><u>N</u>ení ve slovníku</span><div style="left:698px;top:427px;width:404px;height:90px;background:#fff;border:1px solid #828790"></div><div style="left:1084px;top:428px;width:17px;height:88px;background:#f0f0f0"></div><div style="left:1085px;top:446px;width:15px;height:52px;background:#cdcdcd"></div><svg style="left:1087px;top:433px;" width="11" height="8" viewBox="0 0 11 8"><path d="M2 6l3.500-3.500 3.500 3.500" fill="none" stroke="#555" stroke-width="1.800"/></svg><svg style="left:1087px;top:502px;" width="11" height="8" viewBox="0 0 11 8"><path d="M2 2l3.500 3.500 3.500-3.500" fill="none" stroke="#555" stroke-width="1.800"/></svg><div class="btn" style="left:1115px;top:428px;width:111px;height:24px;"></div><span class="t" style="left:1124.5px;top:434px;font-size:12px;line-height:12px;color:#000;letter-spacing:0.161px;"><u>I</u>gnorovat jednou</span><div class="btn" style="left:1115px;top:460px;width:111px;height:24px;"></div><span class="t" style="left:1131.0px;top:466px;font-size:12px;line-height:12px;color:#000;letter-spacing:0.067px;">Ignorovat <u>v</u>ždy</span><div class="btn" style="left:1115px;top:492px;width:111px;height:24px;"></div><span class="t" style="left:1148px;top:498px;font-size:12px;line-height:12px;color:#000;letter-spacing:0.023px;">Přidat</span><div style="left:1205px;top:496px;width:1px;height:16px;background:#a0a0a0"></div><div style="left:1206px;top:496px;width:1px;height:16px;background:#fff"></div><div style="left:1210px;top:501px;width:7px;height:1px;background:#000"></div><div style="left:1211px;top:502px;width:5px;height:1px;background:#000"></div><div style="left:1212px;top:503px;width:3px;height:1px;background:#000"></div><div style="left:1213px;top:504px;width:1px;height:1px;background:#000"></div><span class="t" style="left:698px;top:525px;font-size:12px;line-height:12px;color:#838383;letter-spacing:-0.172px;">Návr<u>h</u>y</span><div style="left:698px;top:544px;width:404px;height:90px;background:#fff;border:1px solid #828790"></div><span class="t" style="left:701.5px;top:548px;font-size:12px;line-height:12px;color:#838383;letter-spacing:-0.218px;">(žádné návrhy)</span><div class="btnd" style="left:1115px;top:545px;width:111px;height:24px;"></div><span class="t" style="left:1147.5px;top:551px;font-size:12px;line-height:12px;color:#838383;letter-spacing:0.078px;">Nahra<u>d</u>it</span><div class="btnd" style="left:1115px;top:578px;width:111px;height:24px;"></div><span class="t" style="left:1134.0px;top:584px;font-size:12px;line-height:12px;color:#838383;letter-spacing:-0.029px;">Nahradit vžd<u>y</u></span><div class="btnd" style="left:1115px;top:610px;width:111px;height:24px;"></div><span class="t" style="left:1117.5px;top:616px;font-size:12px;line-height:12px;color:#838383;letter-spacing:-0.004px;"><u>A</u>utomatická oprava</span><div class="btn" style="left:699px;top:678px;width:111px;height:24px;"></div><span class="t" style="left:727.5px;top:684px;font-size:12px;line-height:12px;color:#000;letter-spacing:-0.090px;">Nápověda</span><div class="btn" style="left:865px;top:678px;width:111px;height:24px;"></div><span class="t" style="left:896.0px;top:684px;font-size:12px;line-height:12px;color:#000;letter-spacing:0.121px;"><u>M</u>ožnosti</span><div class="btn" style="left:990px;top:678px;width:111px;height:24px;"></div><span class="t" style="left:1033.5px;top:684px;font-size:12px;line-height:12px;color:#000;letter-spacing:-0.008px;">Zpě<u>t</u></span><div class="btn" style="left:1115px;top:678px;width:111px;height:24px;"></div><span class="t" style="left:1155.5px;top:684px;font-size:12px;line-height:12px;color:#000;letter-spacing:-0.112px;">Zavřít</span><div style="left:810px;top:451px;width:228px;height:107px;background:#f0f0f0;border:1px solid #1883d7;box-shadow:0 4px 12px rgba(0,0,0,.36),0 0 5px rgba(0,0,0,.2)"></div><div style="left:811px;top:452px;width:226px;height:25px;background:#fff"></div><span class="t" style="left:814.5px;top:458px;font-size:12px;line-height:12px;color:#000;letter-spacing:-0.220px;">OpenOffice 4.1.5</span><svg style="left:1016px;top:458px;" width="12" height="12" viewBox="0 0 12 12"><path d="M1 1.500l10 10M11 1.500l-10 10" stroke="#000" stroke-width="1.100"/></svg><svg style="left:816px;top:484px;" width="32" height="32" viewBox="0 0 32 32"><defs><radialGradient id="ig" cx=".4" cy=".25" r=".85"><stop offset="0" stop-color="#7f9be0"/><stop offset=".45" stop-color="#3558b8"/><stop offset="1" stop-color="#1c3590"/></radialGradient></defs>
      <circle cx="16" cy="16" r="15" fill="url(#ig)" stroke="#16297a" stroke-width=".8"/>
      <ellipse cx="16" cy="9" rx="11" ry="6.500" fill="#fff" opacity=".16"/>
      <circle cx="16" cy="8" r="2.300" fill="#f4f4f4"/><path d="M12.500 12h5.500v9h2.500v2.500h-9.500v-2.500h2.500v-6.500h-1z" fill="#f4f4f4"/></svg><span class="t" style="left:862px;top:496px;font-size:12px;line-height:12px;color:#000;letter-spacing:-0.063px;">Kontrola pravopisu je ukončena.</span><div style="left:890px;top:528px;width:68px;height:23px;background:#e1e1e1;border:2px solid #0078d7"></div><span class="t" style="left:916.5px;top:534px;font-size:12px;line-height:12px;color:#000;letter-spacing:-0.422px;">OK</span><div style="left:915px;top:531px;width:20px;height:18px;border:1px dotted #000"></div>
<!-- p_status -->
<div style="left:3px;top:1021px;width:1919px;height:22px;background:#f0f0f0"></div><div style="left:3px;top:1020px;width:1644px;height:1px;background:#fff"></div><div style="left:3px;top:1042px;width:1919px;height:1px;background:#fff"></div><span class="t" style="left:13px;top:1028px;font-size:12px;line-height:12px;color:#000;letter-spacing:-0.254px;">Strana 1 / 1</span><div style="left:379px;top:1025px;width:1px;height:16px;background:#a0a0a0"></div><div style="left:380px;top:1025px;width:1px;height:16px;background:#fff"></div><div style="left:738px;top:1025px;width:1px;height:16px;background:#a0a0a0"></div><div style="left:739px;top:1025px;width:1px;height:16px;background:#fff"></div><div style="left:1087px;top:1025px;width:1px;height:16px;background:#a0a0a0"></div><div style="left:1088px;top:1025px;width:1px;height:16px;background:#fff"></div><div style="left:1132px;top:1025px;width:1px;height:16px;background:#a0a0a0"></div><div style="left:1133px;top:1025px;width:1px;height:16px;background:#fff"></div><div style="left:1166px;top:1025px;width:1px;height:16px;background:#a0a0a0"></div><div style="left:1167px;top:1025px;width:1px;height:16px;background:#fff"></div><div style="left:1182px;top:1025px;width:1px;height:16px;background:#a0a0a0"></div><div style="left:1183px;top:1025px;width:1px;height:16px;background:#fff"></div><div style="left:1211px;top:1025px;width:1px;height:16px;background:#a0a0a0"></div><div style="left:1212px;top:1025px;width:1px;height:16px;background:#fff"></div><div style="left:1657px;top:1025px;width:1px;height:16px;background:#a0a0a0"></div><div style="left:1658px;top:1025px;width:1px;height:16px;background:#fff"></div><div style="left:1734px;top:1025px;width:1px;height:16px;background:#a0a0a0"></div><div style="left:1735px;top:1025px;width:1px;height:16px;background:#fff"></div><div style="left:1877px;top:1025px;width:1px;height:16px;background:#a0a0a0"></div><div style="left:1878px;top:1025px;width:1px;height:16px;background:#fff"></div><span class="t" style="left:385.5px;top:1028px;font-size:12px;line-height:12px;color:#000;letter-spacing:-0.241px;">Výchozí</span><span class="t" style="left:896.5px;top:1028px;font-size:12px;line-height:12px;color:#000;letter-spacing:-0.569px;">Česky</span><span class="t" style="left:1092px;top:1028px;font-size:12px;line-height:12px;color:#000;letter-spacing:-0.859px;">INSRT</span><span class="t" style="left:1137px;top:1028px;font-size:12px;line-height:12px;color:#000;letter-spacing:-1.000px;">STD</span><span class="t" style="left:1169.5px;top:1028px;font-size:14px;line-height:14px;color:#000;">*</span><svg style="left:1665px;top:1027px;" width="11" height="12" viewBox="0 0 11 12"><path d="M.5 .5h6l3 3v8h-9z" fill="#fff" stroke="#6a6a6a"/><path d="M6.500 .5v3h3" fill="none" stroke="#6a6a6a" stroke-width=".8"/></svg><svg style="left:1680px;top:1027px;" width="21" height="12" viewBox="0 0 21 12"><path d="M.5 .5h6l3 3v8h-9z" fill="#cfe3f8" stroke="#2a5aa0"/><path d="M11.500 .5h6l3 3v8h-9z" fill="#cfe3f8" stroke="#2a5aa0"/><path d="M6.500 .5v3h3M17.500 .5v3h3" fill="none" stroke="#2a5aa0" stroke-width=".8"/></svg><svg style="left:1705px;top:1027px;" width="20" height="12" viewBox="0 0 20 12"><path d="M.5 3.500q0-2 2-2h7v10h-9zM9.500 1.500h7q2 0 2 2v8h-9" fill="#fdfdfd" stroke="#6a6a6a"/></svg><svg style="left:1739px;top:1027px;" width="13" height="13" viewBox="0 0 13 13"><circle cx="6.500" cy="6.500" r="5.500" fill="#d8e8f8" stroke="#2a5aa0" stroke-width="1.100"/><path d="M3.500 6.500h6" stroke="#1a3a80" stroke-width="1.400"/></svg><div style="left:1756px;top:1032px;width:97px;height:1px;background:#8a8a8a"></div><div style="left:1756px;top:1033px;width:97px;height:1px;background:#fff"></div><div style="left:1787px;top:1028px;width:1px;height:4px;background:#777"></div><div style="left:1787px;top:1035px;width:1px;height:4px;background:#777"></div><svg style="left:1799px;top:1028px;" width="10" height="11" viewBox="0 0 10 11"><circle cx="5" cy="5.500" r="4.200" fill="#6f9fd0" stroke="#2a4a78" stroke-width="1"/><circle cx="4.300" cy="4.500" r="1.800" fill="#a8c8e8"/></svg><svg style="left:1857px;top:1027px;" width="13" height="13" viewBox="0 0 13 13"><circle cx="6.500" cy="6.500" r="5.500" fill="#d8e8f8" stroke="#2a5aa0" stroke-width="1.100"/><path d="M3.500 6.500h6M6.500 3.500v6" stroke="#1a3a80" stroke-width="1.400"/></svg><span class="t" style="left:1883px;top:1028px;font-size:12px;line-height:12px;color:#000;letter-spacing:-0.806px;">100 %</span>
<!-- p_taskbar -->
<div style="left:0px;top:1043px;width:1922px;height:37px;background:#0e0e0e"></div><svg style="left:0px;top:1043px;" width="1922" height="37" viewBox="0 0 1922 37"><g fill="#2a2208" opacity=".55"><path d="M246 37L262 0h46L290 37z"/><path d="M428 37L446 0h34L462 37z"/><path d="M482 37L500 0h62L544 37z"/><path d="M1690 37L1712 0h22L1712 37z"/><path d="M1896 37L1906 0h16v37z"/></g><g stroke="#1c1c1c" stroke-width="1" fill="none" opacity=".8"><path d="M90 4l30 14 40-6 50 20M600 30l60-18 70 10 80-16M900 8l90 20 80-12M1300 6l40 22 70-8 60 14M1500 30l50-20 60 8"/></g></svg><div style="left:0px;top:1043px;width:3px;height:37px;background:#3a3d42"></div><svg style="left:19px;top:1055px;" width="17" height="17" viewBox="0 0 17 17"><path d="M0 2.400L7 1.400V8H0zM8 1.250L16.500 0V8H8zM0 9h7v6.600l-7-1zM8 9h8.500v8L8 15.750z" fill="#fff"/></svg><svg style="left:66px;top:1054px;" width="18" height="18" viewBox="0 0 18 18"><circle cx="11.500" cy="6.500" r="5" fill="none" stroke="#fff" stroke-width="1.400"/><path d="M8 10L1.500 16.500" stroke="#fff" stroke-width="1.600"/></svg><svg style="left:112px;top:1055px;" width="22" height="16" viewBox="0 0 22 16"><rect x="5.700" y=".7" width="11.600" height="14" fill="none" stroke="#fff" stroke-width="1.400"/><path d="M3.500 3.500h-2.800v9h2.800M18.500 3.500h2.800v9h-2.800" fill="none" stroke="#fff" stroke-width="1.400"/></svg><svg style="left:163px;top:1051px;" width="22" height="23" viewBox="0 0 22 23"><path d="M1 11Q2 1 11 1q9 0 9.500 10.500v2H8q.5 4 5 4 3.500 0 6.500-1.700v4.700Q16 22 12 22 3 22 3 13.500 3 8 8 5.500 4 6 1 11z" fill="#0f7ad8"/><path d="M8 9.500h6.500Q14.500 6 11.300 6 8.500 6 8 9.500z" fill="#0b0b0b"/></svg><svg style="left:211px;top:1050px;" width="24" height="25" viewBox="0 0 24 25"><defs><radialGradient id="ff" cx=".6" cy=".2" r=".9"><stop offset="0" stop-color="#fff36b"/><stop offset=".35" stop-color="#ffbd2e"/><stop offset=".7" stop-color="#ff5a2a"/><stop offset="1" stop-color="#e31587"/></radialGradient></defs>
      <path d="M12 2.500q2-2 3.500-2 0 3 2 4.500 5 4 5.500 8.500 0 10.500-11 10.500Q1 24 1 13.500 1 7 3.500 4q0 2 1 3 3-4 7.500-4.500z" fill="url(#ff)"/>
      <circle cx="11.500" cy="14" r="6" fill="#2a4fd8"/><path d="M5.500 12q3 3 6 1.500 2-1.500 0-3 3 0 3.500 2.500t-2.500 4q-4 1.500-7-5z" fill="#ff9a1f"/><path d="M7.500 8q2-1.500 4 0l-2 2z" fill="#ff7a1f"/></svg><svg style="left:261px;top:1051px;" width="23" height="23" viewBox="0 0 23 23"><circle cx="11.500" cy="11.500" r="11" fill="#fbc116"/><path d="M11.500 11.500L2 6A11 11 0 0 1 21 6z" fill="#e94235"/><path d="M11.500 11.500L2 6A11 11 0 0 0 9.500 22.300z" fill="#2da94f"/><path d="M11.500 11.500L21 6H11.500z" fill="#e94235"/><path d="M2 6A11 11 0 0 1 21 6H11.500z" fill="#e94235"/><path d="M21 6A11 11 0 0 1 9.500 22.300L15.500 13z" fill="#fbc116"/><circle cx="11.500" cy="11.500" r="5.300" fill="#fff"/><circle cx="11.500" cy="11.500" r="4.200" fill="#4a8af4"/></svg><svg style="left:309px;top:1050px;" width="25" height="25" viewBox="0 0 25 25"><path d="M4 14Q4 4.500 12.500 4.500 20.500 4.500 21 13v2H9q.5 3.500 4.500 3.500 3 0 5.500-1.500l1 3.500Q17 22.500 13 22.500 4 22.500 4 14z" fill="#37b6f0"/><path d="M9 11.500h7Q16 8 12.500 8 9.500 8 9 11.500z" fill="#0b0b0b"/><path d="M20 3.500Q22 1.500 18 1.500 12 2 6 8.500 0 16 1.500 21q1.200 3 6 .5" fill="none" stroke="#f3c21b" stroke-width="1.900"/></svg><div style="left:346px;top:1043px;width:48px;height:37px;background:#3b3b3b"></div><svg style="left:358px;top:1051px;" width="24" height="24" viewBox="0 0 24 24"><circle cx="12" cy="12" r="11.400" fill="#1c86d0"/><path d="M1.400 14.500q4.500-1.200 7.500 1.600 4-4.600 13.300-4-7 1.200-10.500 6.800-1.400-3.600-10.300-4.400z" fill="#fff"/><path d="M8.200 7.400q3.300-.600 5.400 1.200 2-2 6-1.800-3.600 1-5.200 3.800-1.400-2.600-6.200-3.200z" fill="#fff"/></svg><svg style="left:408px;top:1053px;" width="22" height="19" viewBox="0 0 22 19"><path d="M0 2q0-1 1-1h7l1.500 1.500H21q1 0 1 1V18H0z" fill="#f7d774"/><path d="M0 5h22v13H0z" fill="#fbe49a"/><path d="M1.500 1.500h6" stroke="#58b4e8" stroke-width="1"/><path d="M5 18v-6.500h12V18h-3.500v-3h-5v3z" fill="#3aa0e8"/></svg><svg style="left:1664px;top:1055px;" width="16" height="16" viewBox="0 0 16 16"><rect width="16" height="16" fill="#3a3f4a"/><path d="M2 8q3-4.500 12-4.500v9Q5 12.500 2 8z" fill="#76b900"/><path d="M4.500 8q2-2.500 5-2.500Q12 6.500 10 9q-2 1.500-4 .3 2 .5 3-1t-1.500-1.500Q6 7 4.500 8z" fill="#3a3f4a"/></svg><svg style="left:1690px;top:1054px;" width="15" height="18" viewBox="0 0 15 18"><path d="M2.500 1h6v4.500h-6zM1.500 5.500h8v11h-8z" fill="none" stroke="#fff" stroke-width="1.200"/><path d="M4.300 3h.8M6.200 3h.8" stroke="#fff" stroke-width="1"/><path d="M8 14l2 2 4-4.500" fill="none" stroke="#bbb" stroke-width="1.200"/></svg><svg style="left:1712px;top:1054px;" width="17" height="18" viewBox="0 0 17 18"><path d="M7.500 .8q3 1.700 7 2 0 9.500-7 13.200Q.5 12.300 .5 2.800q4-.3 7-2z" fill="#fff"/><path d="M7.500 .8v15.200M.7 7.800h13.600" stroke="#0b0b0b" stroke-width="1.100"/><circle cx="12" cy="12.500" r="4.400" fill="#16a04a"/><path d="M9.800 12.500l1.700 1.700 2.900-3.200" fill="none" stroke="#fff" stroke-width="1.300"/></svg><svg style="left:1735px;top:1054px;" width="18" height="18" viewBox="0 0 18 18"><path d="M9 1.500q2.500 0 2 3 3-2 4.500.5t-1.500 4q3.500 1.500 2 4t-4.500.5q.5 3.500-2.500 3.500t-2.500-3.500q-3 2-4.500-.5t2-4q-3.500-2-2-4.500t4.500-.5q-.5-3 2-2.500z" fill="#ff7800"/><text x="8.700" y="12" font-family="Liberation Sans" font-weight="bold" font-size="9.500" fill="#fff" text-anchor="middle">a</text></svg><svg style="left:1759px;top:1056px;" width="18" height="16" viewBox="0 0 18 16"><rect x="3.700" y="1.700" width="13.600" height="9" fill="none" stroke="#fff" stroke-width="1.300"/><path d="M10.500 11v3M6.500 14.500h8" stroke="#fff" stroke-width="1.300"/><rect x=".7" y="2.700" width="5" height="4" fill="#0b0b0b" stroke="#fff" stroke-width="1.100"/><path d="M3.200 7v7.500" stroke="#fff" stroke-width="1.200"/></svg><svg style="left:1783px;top:1054px;" width="18" height="18" viewBox="0 0 18 18"><path d="M1 6.500h3l4-4v13l-4-4H1z" fill="none" stroke="#fff" stroke-width="1.200" stroke-linejoin="round"/><path d="M10.500 6.500q1.500 2.500 0 5M12.800 4.500q2.800 4.500 0 9M15 2.500q4 6.500 0 13" fill="none" stroke="#fff" stroke-width="1.100"/></svg><span class="t" style="left:1823.5px;top:1048px;font-size:12px;line-height:12px;color:#fff;letter-spacing:-0.906px;">19:01</span><span class="t" style="left:1810px;top:1066px;font-size:12px;line-height:12px;color:#fff;letter-spacing:-0.606px;">06.01.2018</span><svg style="left:1882px;top:1055px;" width="17" height="17" viewBox="0 0 17 17"><path d="M.7 .7h15.600v11h-5.800L8.500 14 6.500 11.700H.7z" fill="none" stroke="#fff" stroke-width="1.300"/></svg><div style="left:1918px;top:1043px;width:1px;height:37px;background:#6a6a6a"></div>
</body></html>
